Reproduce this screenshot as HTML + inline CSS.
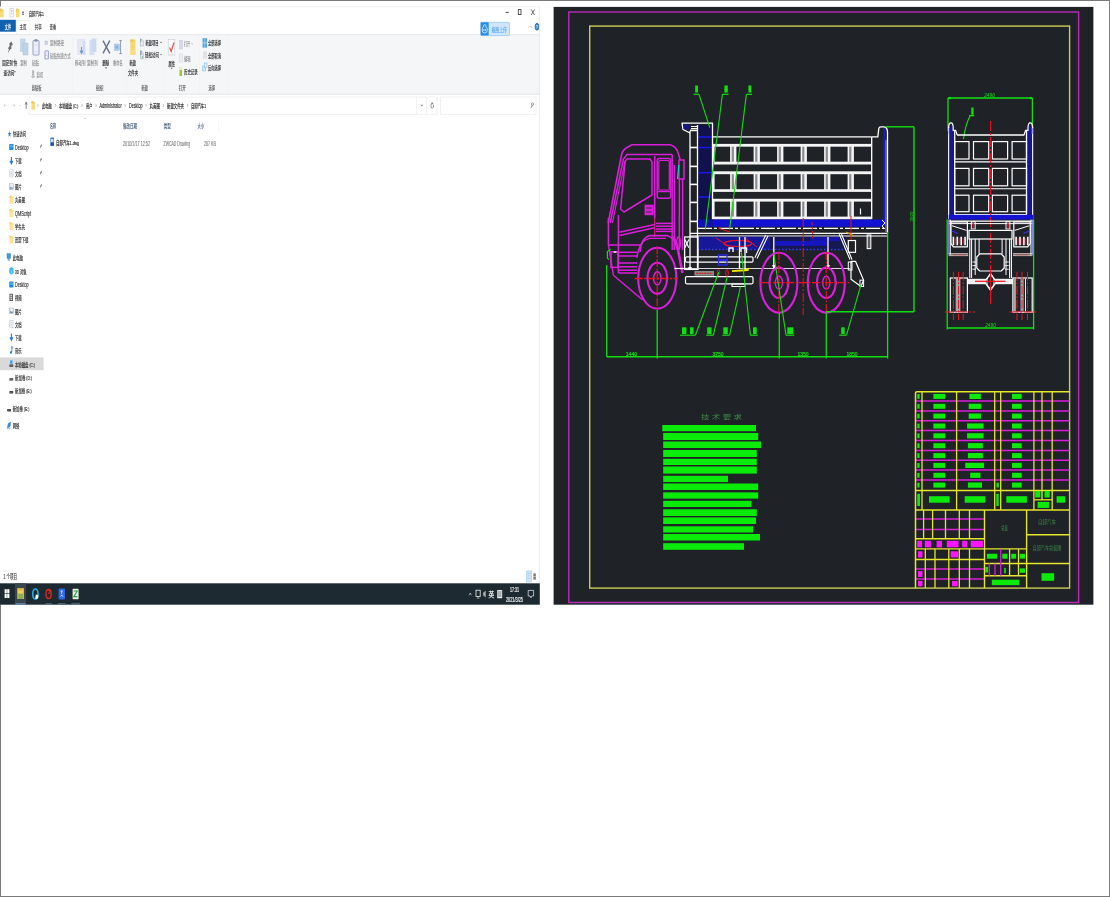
<!DOCTYPE html>
<html lang="zh-CN"><head><meta charset="utf-8"><title>自卸汽车1</title>
<style>
html,body{margin:0;padding:0;background:#fff;}
body{width:1110px;height:897px;overflow:hidden;position:relative;font-family:"Liberation Sans","Noto Sans CJK SC",sans-serif;}
#frame{position:absolute;left:0;top:0;width:1108px;height:895px;border:1px solid #7a7a7a;}
svg{position:absolute;left:0;top:0;opacity:0.999;}
text{white-space:pre;}
#cad{filter:blur(0.35px);}
#explorer{filter:blur(0.25px);}
</style></head><body>
<div id="frame"></div>
<svg id="explorer" width="1110" height="897" viewBox="0 0 1110 897">
<rect x="0" y="6.7" width="539.8" height="598" fill="#ffffff" stroke="none" stroke-width="1" rx="0" />
<line x1="0" y1="6.9" x2="539.8" y2="6.9" stroke="#e6e6e6" stroke-width="0.6" />
<rect x="0" y="8.6" width="2" height="2.2" fill="#e9b94e" stroke="none" stroke-width="1" rx="0" />
<rect x="0" y="9.6" width="3.6" height="7.6" fill="#f7d978" stroke="none" stroke-width="1" rx="0" />
<rect x="0" y="9.6" width="3.6" height="1.5" fill="#e9b94e" stroke="none" stroke-width="1" rx="0" opacity="0.55"/>
<rect x="10" y="8.4" width="3.2" height="8.6" fill="#fdfdfd" stroke="#b9b9c6" stroke-width="0.5" rx="0" />
<line x1="11" y1="11" x2="12.4" y2="11" stroke="#c55" stroke-width="0.7" />
<line x1="11" y1="13.8" x2="12.4" y2="13.8" stroke="#88a" stroke-width="0.6" />
<rect x="16" y="8.6" width="2" height="2.2" fill="#efc44f" stroke="none" stroke-width="1" rx="0" />
<rect x="16" y="9.6" width="3.6" height="7.6" fill="#f8dc6e" stroke="none" stroke-width="1" rx="0" />
<rect x="16" y="9.6" width="3.6" height="1.5" fill="#efc44f" stroke="none" stroke-width="1" rx="0" opacity="0.55"/>
<line x1="22" y1="12.2" x2="24" y2="12.2" stroke="#333" stroke-width="0.9" />
<line x1="22" y1="14.2" x2="24" y2="14.2" stroke="#333" stroke-width="0.9" />
<line x1="26.2" y1="9.5" x2="26.2" y2="16.5" stroke="#d8d8d8" stroke-width="0.5" />
<text x="28.7" y="15.6" textLength="15.3" lengthAdjust="spacingAndGlyphs" fill="#333" stroke="#333" stroke-width="0.18" font-size="5.9" font-family="Liberation Sans, 'Noto Sans CJK SC', sans-serif" >自卸汽车1</text>
<line x1="505.5" y1="12.4" x2="508.8" y2="12.4" stroke="#333" stroke-width="0.8" />
<rect x="518.3" y="9.6" width="2.7" height="5" fill="none" stroke="#333" stroke-width="0.8" rx="0" />
<line x1="531.2" y1="9.4" x2="534.6" y2="15" stroke="#333" stroke-width="0.7" />
<line x1="534.6" y1="9.4" x2="531.2" y2="15" stroke="#333" stroke-width="0.7" />
<rect x="0" y="19.8" width="15.8" height="11.9" fill="#1161b1" stroke="none" stroke-width="1" rx="0" />
<text x="4.8" y="29" textLength="6.2" lengthAdjust="spacingAndGlyphs" fill="#ffffff" stroke="#ffffff" stroke-width="0.18" font-size="6.2" font-family="Liberation Sans, 'Noto Sans CJK SC', sans-serif" >文件</text>
<text x="19.5" y="29.2" textLength="7" lengthAdjust="spacingAndGlyphs" fill="#444" stroke="#444" stroke-width="0.18" font-size="6.2" font-family="Liberation Sans, 'Noto Sans CJK SC', sans-serif" >主页</text>
<text x="34.7" y="29.2" textLength="6.9" lengthAdjust="spacingAndGlyphs" fill="#444" stroke="#444" stroke-width="0.18" font-size="6.2" font-family="Liberation Sans, 'Noto Sans CJK SC', sans-serif" >共享</text>
<text x="49.8" y="29.2" textLength="6.2" lengthAdjust="spacingAndGlyphs" fill="#444" stroke="#444" stroke-width="0.18" font-size="6.2" font-family="Liberation Sans, 'Noto Sans CJK SC', sans-serif" >查看</text>
<rect x="16.6" y="20.6" width="13.4" height="14.2" fill="none" stroke="#e4e5e6" stroke-width="0.5" rx="0" />
<rect x="0" y="34.6" width="539.8" height="59.6" fill="#f5f6f7" stroke="none" stroke-width="1" rx="0" />
<line x1="0" y1="34.6" x2="539.8" y2="34.6" stroke="#e2e3e4" stroke-width="0.7" />
<line x1="0" y1="94.2" x2="539.8" y2="94.2" stroke="#dcdddd" stroke-width="0.8" />
<line x1="72.7" y1="37" x2="72.7" y2="92" stroke="#eeeff0" stroke-width="0.5" />
<line x1="126.3" y1="37" x2="126.3" y2="92" stroke="#eeeff0" stroke-width="0.5" />
<line x1="164" y1="37" x2="164" y2="92" stroke="#eeeff0" stroke-width="0.5" />
<line x1="199.3" y1="37" x2="199.3" y2="92" stroke="#eeeff0" stroke-width="0.5" />
<line x1="228" y1="37" x2="228" y2="92" stroke="#eeeff0" stroke-width="0.5" />
<path d="M11.6 41.5 l1.2 3.2 l-1.6 1.4 l0.3 3 l-1.3 0.2 l-2.4 4.2 l1.2 -4.6 l-1.2 -0.4 l1.8 -2.6 l-0.2 -2.6 z" fill="#6e6e6e" stroke="none" stroke-width="0" />
<text x="2.3" y="65.3" textLength="15" lengthAdjust="spacingAndGlyphs" fill="#333" stroke="#333" stroke-width="0.18" font-size="6.0" font-family="Liberation Sans, 'Noto Sans CJK SC', sans-serif" >固定到“快</text>
<text x="3.6" y="74.7" textLength="11.9" lengthAdjust="spacingAndGlyphs" fill="#333" stroke="#333" stroke-width="0.18" font-size="6.0" font-family="Liberation Sans, 'Noto Sans CJK SC', sans-serif" >速访问”</text>
<rect x="20.4" y="39" width="4.6" height="12.5" fill="#c4d7ec" stroke="#a9c2de" stroke-width="0.4" rx="0" />
<rect x="23" y="43" width="5" height="12" fill="#bdd3ea" stroke="#a3bfdc" stroke-width="0.4" rx="0" />
<text x="20.2" y="65.3" textLength="6.8" lengthAdjust="spacingAndGlyphs" fill="#8c8c8c" stroke="#8c8c8c" stroke-width="0.1" font-size="6.0" font-family="Liberation Sans, 'Noto Sans CJK SC', sans-serif" >复制</text>
<rect x="33" y="40.5" width="6" height="14.5" fill="#edf0f8" stroke="#7e8db6" stroke-width="0.8" rx="0.6" />
<rect x="34.6" y="39.2" width="2.8" height="2.4" fill="#7e8db6" stroke="none" stroke-width="1" rx="0" />
<line x1="34.8" y1="45" x2="37.2" y2="45" stroke="#b8c0d8" stroke-width="0.5" />
<line x1="34.8" y1="51.6" x2="37.2" y2="51.6" stroke="#b8c0d8" stroke-width="0.5" />
<text x="32" y="65.3" textLength="7" lengthAdjust="spacingAndGlyphs" fill="#8c8c8c" stroke="#8c8c8c" stroke-width="0.1" font-size="6.0" font-family="Liberation Sans, 'Noto Sans CJK SC', sans-serif" >粘贴</text>
<path d="M32.6 70.2 v5 M33.6 70.2 v5" fill="none" stroke="#777" stroke-width="0.5" />
<ellipse cx="32.4" cy="76.6" rx="0.6" ry="1" fill="none" stroke="#777" stroke-width="0.4"/>
<ellipse cx="33.8" cy="76.6" rx="0.6" ry="1" fill="none" stroke="#777" stroke-width="0.4"/>
<text x="36.4" y="76.5" textLength="6.8" lengthAdjust="spacingAndGlyphs" fill="#8c8c8c" stroke="#8c8c8c" stroke-width="0.1" font-size="6.0" font-family="Liberation Sans, 'Noto Sans CJK SC', sans-serif" >剪切</text>
<rect x="45" y="41" width="2.4" height="3.6" fill="#d6dbe6" stroke="#9aa3b8" stroke-width="0.4" rx="0" />
<text x="50" y="45.3" textLength="14" lengthAdjust="spacingAndGlyphs" fill="#8c8c8c" stroke="#8c8c8c" stroke-width="0.1" font-size="6.0" font-family="Liberation Sans, 'Noto Sans CJK SC', sans-serif" >复制路径</text>
<rect x="44.9" y="50.8" width="3.6" height="8.2" fill="#e4e8f6" stroke="#7f8cc0" stroke-width="0.7" rx="0.5" />
<rect x="45.8" y="55.2" width="1.8" height="3" fill="#fff" stroke="#8f9acb" stroke-width="0.3" rx="0" />
<text x="50" y="57.6" textLength="20.6" lengthAdjust="spacingAndGlyphs" fill="#8c8c8c" stroke="#8c8c8c" stroke-width="0.1" font-size="6.0" font-family="Liberation Sans, 'Noto Sans CJK SC', sans-serif" >粘贴快捷方式</text>
<text x="31.7" y="90.2" textLength="9.7" lengthAdjust="spacingAndGlyphs" fill="#666" stroke="#666" stroke-width="0.18" font-size="6.0" font-family="Liberation Sans, 'Noto Sans CJK SC', sans-serif" >剪贴板</text>
<rect x="77" y="39" width="8" height="16" fill="#e4e6f4" stroke="none" stroke-width="1" rx="0" />
<path d="M81.6 47 v5 M80 50.6 l1.6 2.6 l1.6 -2.6" fill="none" stroke="#6d9bd6" stroke-width="1.1" />
<rect x="83" y="41" width="2.4" height="14" fill="#d2dbed" stroke="none" stroke-width="1" rx="0" />
<text x="75" y="65.3" textLength="10.5" lengthAdjust="spacingAndGlyphs" fill="#8c8c8c" stroke="#8c8c8c" stroke-width="0.1" font-size="6.0" font-family="Liberation Sans, 'Noto Sans CJK SC', sans-serif" >移动到</text>
<rect x="89.4" y="40" width="5.1" height="15" fill="#d3e0f0" stroke="none" stroke-width="1" rx="0" />
<rect x="91.5" y="38.6" width="4.9" height="13.4" fill="#c9daee" stroke="none" stroke-width="1" rx="0" />
<text x="87" y="65.3" textLength="10.7" lengthAdjust="spacingAndGlyphs" fill="#8c8c8c" stroke="#8c8c8c" stroke-width="0.1" font-size="6.0" font-family="Liberation Sans, 'Noto Sans CJK SC', sans-serif" >复制到</text>
<line x1="103" y1="40.6" x2="109.8" y2="53.4" stroke="#67738c" stroke-width="1.4" />
<line x1="109.8" y1="40.6" x2="103" y2="53.4" stroke="#67738c" stroke-width="1.4" />
<text x="102.5" y="65.3" textLength="6.7" lengthAdjust="spacingAndGlyphs" fill="#333" stroke="#333" stroke-width="0.18" font-size="6.0" font-family="Liberation Sans, 'Noto Sans CJK SC', sans-serif" >删除</text>
<path d="M105.4 67.6 h1.2 l-0.6 1 z" fill="#333" stroke="#333" stroke-width="0.3" />
<rect x="114.3" y="44" width="5.3" height="6.5" fill="#b4cdea" stroke="#9bb9dd" stroke-width="0.4" rx="0" />
<rect x="115.4" y="45.6" width="2.6" height="3" fill="#8eb0d8" stroke="none" stroke-width="1" rx="0" />
<path d="M119.3 40.6 h2.6 M120.6 40.6 v13 M119.3 53.6 h2.6" fill="none" stroke="#7385a4" stroke-width="0.8" />
<text x="113" y="65.3" textLength="9.6" lengthAdjust="spacingAndGlyphs" fill="#8c8c8c" stroke="#8c8c8c" stroke-width="0.1" font-size="6.0" font-family="Liberation Sans, 'Noto Sans CJK SC', sans-serif" >重命名</text>
<rect x="130.3" y="39.5" width="5.1" height="15.5" fill="#f7d86e" stroke="none" stroke-width="1" rx="0" />
<rect x="130.3" y="39.5" width="3.1" height="2.5" fill="#f0c656" stroke="none" stroke-width="1" rx="0" />
<rect x="130" y="50" width="5.6" height="5" fill="#f9e08a" stroke="none" stroke-width="1" rx="0" opacity="0.7"/>
<text x="129.5" y="65.3" textLength="6.5" lengthAdjust="spacingAndGlyphs" fill="#333" stroke="#333" stroke-width="0.18" font-size="6.0" font-family="Liberation Sans, 'Noto Sans CJK SC', sans-serif" >新建</text>
<text x="128" y="75" textLength="10" lengthAdjust="spacingAndGlyphs" fill="#333" stroke="#333" stroke-width="0.18" font-size="6.0" font-family="Liberation Sans, 'Noto Sans CJK SC', sans-serif" >文件夹</text>
<text x="96" y="90.2" textLength="7.5" lengthAdjust="spacingAndGlyphs" fill="#666" stroke="#666" stroke-width="0.18" font-size="6.0" font-family="Liberation Sans, 'Noto Sans CJK SC', sans-serif" >组织</text>
<text x="141.5" y="90.2" textLength="6.5" lengthAdjust="spacingAndGlyphs" fill="#666" stroke="#666" stroke-width="0.18" font-size="6.0" font-family="Liberation Sans, 'Noto Sans CJK SC', sans-serif" >新建</text>
<path d="M140.4 38.6 v7.4 h2.8 v-5.4 z" fill="#f0eef8" stroke="#8d96b8" stroke-width="0.5" />
<line x1="140.8" y1="39" x2="140.8" y2="42" stroke="#5aa05a" stroke-width="0.7" />
<text x="145.4" y="45" textLength="13.1" lengthAdjust="spacingAndGlyphs" fill="#333" stroke="#333" stroke-width="0.18" font-size="6.0" font-family="Liberation Sans, 'Noto Sans CJK SC', sans-serif" >新建项目</text>
<path d="M160.4 42 h1.3 l-0.65 0.9 z" fill="#333" stroke="#333" stroke-width="0.2" />
<path d="M140.6 50.4 v8.4 h2.6 v-6 z" fill="#eef3f8" stroke="#8d96b8" stroke-width="0.5" />
<line x1="141" y1="51" x2="141" y2="55" stroke="#55a" stroke-width="0.7" />
<line x1="142.4" y1="56" x2="142.4" y2="58.5" stroke="#5a5" stroke-width="0.6" />
<text x="145" y="57.2" textLength="14" lengthAdjust="spacingAndGlyphs" fill="#333" stroke="#333" stroke-width="0.18" font-size="6.0" font-family="Liberation Sans, 'Noto Sans CJK SC', sans-serif" >轻松访问</text>
<path d="M160.4 54.2 h1.3 l-0.65 0.9 z" fill="#333" stroke="#333" stroke-width="0.2" />
<rect x="168.2" y="39.6" width="6.6" height="15.4" fill="#fefefe" stroke="#c9c9d2" stroke-width="0.6" rx="0" />
<path d="M169.6 47.5 l1.6 4 l2.8 -9" fill="none" stroke="#e24a42" stroke-width="1.1" />
<line x1="169.4" y1="54" x2="173.8" y2="54" stroke="#e8b0b0" stroke-width="0.5" />
<text x="168.5" y="65.7" textLength="6.5" lengthAdjust="spacingAndGlyphs" fill="#333" stroke="#333" stroke-width="0.18" font-size="6.0" font-family="Liberation Sans, 'Noto Sans CJK SC', sans-serif" >属性</text>
<path d="M171 68.2 h1.3 l-0.65 0.9 z" fill="#333" stroke="#333" stroke-width="0.2" />
<rect x="179.5" y="40.2" width="3" height="8.8" fill="#d5dae8" stroke="#b9c0d6" stroke-width="0.4" rx="0" />
<text x="184" y="46.4" textLength="6" lengthAdjust="spacingAndGlyphs" fill="#8c8c8c" stroke="#8c8c8c" stroke-width="0.1" font-size="6.0" font-family="Liberation Sans, 'Noto Sans CJK SC', sans-serif" >打开</text>
<path d="M191.6 43.6 h1.1 l-0.55 0.8 z" fill="#aaa" stroke="#aaa" stroke-width="0.2" />
<rect x="179.5" y="54" width="3" height="8" fill="#eceef4" stroke="#c6cad8" stroke-width="0.4" rx="0" />
<text x="184" y="60.6" textLength="6.5" lengthAdjust="spacingAndGlyphs" fill="#8c8c8c" stroke="#8c8c8c" stroke-width="0.1" font-size="6.0" font-family="Liberation Sans, 'Noto Sans CJK SC', sans-serif" >编辑</text>
<rect x="179" y="67" width="3.4" height="9" fill="#e8eec0" stroke="none" stroke-width="1" rx="0" />
<rect x="179.6" y="70" width="2.4" height="6" fill="#9cc43c" stroke="none" stroke-width="1" rx="0" />
<text x="184" y="73.8" textLength="13.6" lengthAdjust="spacingAndGlyphs" fill="#333" stroke="#333" stroke-width="0.18" font-size="6.0" font-family="Liberation Sans, 'Noto Sans CJK SC', sans-serif" >历史记录</text>
<text x="178.7" y="90.2" textLength="7.3" lengthAdjust="spacingAndGlyphs" fill="#666" stroke="#666" stroke-width="0.18" font-size="6.0" font-family="Liberation Sans, 'Noto Sans CJK SC', sans-serif" >打开</text>
<rect x="202.6" y="38.2" width="4.4" height="9.4" fill="#4aa0ea" stroke="none" stroke-width="1" rx="0" />
<line x1="202.6" y1="42.9" x2="207" y2="42.9" stroke="#e8f3ff" stroke-width="0.6" />
<line x1="204.8" y1="38.2" x2="204.8" y2="47.6" stroke="#e8f3ff" stroke-width="0.5" />
<text x="208" y="45" textLength="13" lengthAdjust="spacingAndGlyphs" fill="#333" stroke="#333" stroke-width="0.18" font-size="6.0" font-family="Liberation Sans, 'Noto Sans CJK SC', sans-serif" >全部选择</text>
<rect x="203" y="51" width="4" height="8" fill="#e6e6ea" stroke="none" stroke-width="1" rx="0" />
<line x1="203" y1="53.6" x2="207" y2="53.6" stroke="#cfcfd6" stroke-width="0.5" />
<line x1="203" y1="56.3" x2="207" y2="56.3" stroke="#cfcfd6" stroke-width="0.5" />
<text x="208" y="57.6" textLength="13" lengthAdjust="spacingAndGlyphs" fill="#333" stroke="#333" stroke-width="0.18" font-size="6.0" font-family="Liberation Sans, 'Noto Sans CJK SC', sans-serif" >全部取消</text>
<rect x="202.8" y="66" width="2.8" height="5" fill="#dcebfa" stroke="#6aa8e6" stroke-width="0.5" rx="0" />
<rect x="204.4" y="63" width="2.6" height="4.6" fill="#eaf3fc" stroke="#6aa8e6" stroke-width="0.5" rx="0" />
<text x="208" y="69.7" textLength="13" lengthAdjust="spacingAndGlyphs" fill="#333" stroke="#333" stroke-width="0.18" font-size="6.0" font-family="Liberation Sans, 'Noto Sans CJK SC', sans-serif" >反向选择</text>
<text x="208.5" y="90.2" textLength="6.5" lengthAdjust="spacingAndGlyphs" fill="#666" stroke="#666" stroke-width="0.18" font-size="6.0" font-family="Liberation Sans, 'Noto Sans CJK SC', sans-serif" >选择</text>
<rect x="480.7" y="22.3" width="28.8" height="13.3" fill="#cfe7fb" stroke="#7bbcf0" stroke-width="0.6" rx="0.8" />
<rect x="480.7" y="22.3" width="8" height="13.3" fill="#2a8ee8" stroke="none" stroke-width="1" rx="0.8" />
<path d="M484.7 24.6 q1.4 0 1.4 2.2 q1.2 1 1.2 3.2 q0 3 -2.6 3 q-2.6 0 -2.6 -3 q0 -2.2 1.2 -3.2 q0 -2.2 1.4 -2.2z" fill="none" stroke="#fff" stroke-width="0.7" />
<circle cx="483.9" cy="30" r="0.7" fill="#fff"/><circle cx="485.5" cy="30" r="0.7" fill="#fff"/>
<text x="491.5" y="32" textLength="15.5" lengthAdjust="spacingAndGlyphs" fill="#5aa8ec" stroke="#5aa8ec" stroke-width="0.1" font-size="6.2" font-family="Liberation Sans, 'Noto Sans CJK SC', sans-serif" >拖拽上传</text>
<path d="M528.8 27.6 l1.4 -1.6 l1.4 1.6" fill="none" stroke="#c9a27a" stroke-width="0.6" />
<ellipse cx="537" cy="26.7" rx="1.9" ry="3.5" fill="#2f7fd0" stroke="#1f6fc0" stroke-width="0.8"/>
<text x="536.3" y="29.2" textLength="1.4" lengthAdjust="spacingAndGlyphs" fill="#fff" stroke="#fff" stroke-width="0.18" font-size="5" font-family="Liberation Sans, 'Noto Sans CJK SC', sans-serif" >?</text>
<path d="M4 105.4 h2.6 M4 105.4 l0.9 -1.4 M4 105.4 l0.9 1.4" fill="none" stroke="#c8c8c8" stroke-width="0.6" />
<path d="M15 105.4 h-2.6 M15 105.4 l-0.9 -1.4 M15 105.4 l-0.9 1.4" fill="none" stroke="#c8c8c8" stroke-width="0.6" />
<path d="M19.6 105 l0.6 0.9 l0.6 -0.9" fill="none" stroke="#bbb" stroke-width="0.5" />
<path d="M26.2 109 v-6.6 M25.2 104.6 l1 -2.4 l1 2.4" fill="none" stroke="#6a6a6a" stroke-width="0.8" />
<rect x="29" y="97" width="408" height="17.2" fill="#fff" stroke="#e6e6e6" stroke-width="0.6" rx="0" />
<rect x="440.5" y="97" width="95.5" height="17.2" fill="#fff" stroke="#e6e6e6" stroke-width="0.6" rx="0" />
<line x1="416.5" y1="97" x2="416.5" y2="114.2" stroke="#e6e6e6" stroke-width="0.5" />
<line x1="426.5" y1="97" x2="426.5" y2="114.2" stroke="#e6e6e6" stroke-width="0.5" />
<path d="M421 104.6 l0.8 1.6 l0.8 -1.6" fill="none" stroke="#555" stroke-width="0.6" />
<path d="M432.6 103.4 a1.3 2.4 0 1 0 0.9 1.4 M432.2 102.2 v1.6 h1.2" fill="none" stroke="#555" stroke-width="0.6" />
<path d="M532.6 102.6 a0.9 1.6 0 1 1 -0.1 0 M531.9 105.4 l-1 2.6" fill="none" stroke="#555" stroke-width="0.6" />
<rect x="31.4" y="101" width="2" height="2.2" fill="#edc050" stroke="none" stroke-width="1" rx="0" />
<rect x="31.4" y="102" width="3.6" height="7.7" fill="#f8dc7a" stroke="none" stroke-width="1" rx="0" />
<rect x="31.4" y="102" width="3.6" height="1.6" fill="#edc050" stroke="none" stroke-width="1" rx="0" opacity="0.55"/>
<path d="M37.65 104 l0.7 1.4 l-0.7 1.4" fill="none" stroke="#777" stroke-width="0.45" />
<path d="M55.35 104 l0.7 1.4 l-0.7 1.4" fill="none" stroke="#777" stroke-width="0.45" />
<path d="M81.65 104 l0.7 1.4 l-0.7 1.4" fill="none" stroke="#777" stroke-width="0.45" />
<path d="M95.65 104 l0.7 1.4 l-0.7 1.4" fill="none" stroke="#777" stroke-width="0.45" />
<path d="M124.65 104 l0.7 1.4 l-0.7 1.4" fill="none" stroke="#777" stroke-width="0.45" />
<path d="M145.65 104 l0.7 1.4 l-0.7 1.4" fill="none" stroke="#777" stroke-width="0.45" />
<path d="M163.15 104 l0.7 1.4 l-0.7 1.4" fill="none" stroke="#777" stroke-width="0.45" />
<path d="M187.25 104 l0.7 1.4 l-0.7 1.4" fill="none" stroke="#777" stroke-width="0.45" />
<text x="42" y="107.9" textLength="9.7" lengthAdjust="spacingAndGlyphs" fill="#2f2f2f" stroke="#2f2f2f" stroke-width="0.18" font-size="6.0" font-family="Liberation Sans, 'Noto Sans CJK SC', sans-serif" >此电脑</text>
<text x="59" y="107.9" textLength="19.4" lengthAdjust="spacingAndGlyphs" fill="#2f2f2f" stroke="#2f2f2f" stroke-width="0.18" font-size="6.0" font-family="Liberation Sans, 'Noto Sans CJK SC', sans-serif" >本地磁盘 (C:)</text>
<text x="86" y="107.9" textLength="6.4" lengthAdjust="spacingAndGlyphs" fill="#2f2f2f" stroke="#2f2f2f" stroke-width="0.18" font-size="6.0" font-family="Liberation Sans, 'Noto Sans CJK SC', sans-serif" >用户</text>
<text x="99.5" y="108.1" textLength="22.2" lengthAdjust="spacingAndGlyphs" fill="#2f2f2f" stroke="#2f2f2f" stroke-width="0.18" font-size="6.6000000000000005" font-family="Liberation Sans, 'Noto Sans CJK SC', sans-serif" >Administrator</text>
<text x="129" y="108.1" textLength="13.6" lengthAdjust="spacingAndGlyphs" fill="#2f2f2f" stroke="#2f2f2f" stroke-width="0.18" font-size="6.6000000000000005" font-family="Liberation Sans, 'Noto Sans CJK SC', sans-serif" >Desktop</text>
<text x="149.5" y="107.9" textLength="10.5" lengthAdjust="spacingAndGlyphs" fill="#2f2f2f" stroke="#2f2f2f" stroke-width="0.18" font-size="6.0" font-family="Liberation Sans, 'Noto Sans CJK SC', sans-serif" >丸美图</text>
<text x="167" y="107.9" textLength="17" lengthAdjust="spacingAndGlyphs" fill="#2f2f2f" stroke="#2f2f2f" stroke-width="0.18" font-size="6.0" font-family="Liberation Sans, 'Noto Sans CJK SC', sans-serif" >新建文件夹</text>
<text x="190.9" y="107.9" textLength="15.1" lengthAdjust="spacingAndGlyphs" fill="#2f2f2f" stroke="#2f2f2f" stroke-width="0.18" font-size="6.0" font-family="Liberation Sans, 'Noto Sans CJK SC', sans-serif" >自卸汽车1</text>
<text x="50" y="128.4" textLength="6" lengthAdjust="spacingAndGlyphs" fill="#4a6080" stroke="#4a6080" stroke-width="0.18" font-size="6.0" font-family="Liberation Sans, 'Noto Sans CJK SC', sans-serif" >名称</text>
<text x="123" y="128.4" textLength="14" lengthAdjust="spacingAndGlyphs" fill="#4a6080" stroke="#4a6080" stroke-width="0.18" font-size="6.0" font-family="Liberation Sans, 'Noto Sans CJK SC', sans-serif" >修改日期</text>
<text x="163.8" y="128.4" textLength="6.9" lengthAdjust="spacingAndGlyphs" fill="#4a6080" stroke="#4a6080" stroke-width="0.18" font-size="6.0" font-family="Liberation Sans, 'Noto Sans CJK SC', sans-serif" >类型</text>
<text x="197.4" y="128.4" textLength="6.6" lengthAdjust="spacingAndGlyphs" fill="#4a6080" stroke="#4a6080" stroke-width="0.18" font-size="6.0" font-family="Liberation Sans, 'Noto Sans CJK SC', sans-serif" >大小</text>
<path d="M84.6 119 l0.6 -0.9 l0.6 0.9" fill="none" stroke="#999" stroke-width="0.5" />
<line x1="121" y1="120" x2="121" y2="131" stroke="#ececec" stroke-width="0.5" />
<line x1="162" y1="120" x2="162" y2="131" stroke="#ececec" stroke-width="0.5" />
<line x1="195.4" y1="120" x2="195.4" y2="131" stroke="#ececec" stroke-width="0.5" />
<line x1="218.6" y1="120" x2="218.6" y2="131" stroke="#ececec" stroke-width="0.5" />
<rect x="50.4" y="137.6" width="3.6" height="8.4" fill="#3a78c8" stroke="none" stroke-width="1" rx="0.6" />
<rect x="50.9" y="139" width="2.6" height="3" fill="#cfe0f6" stroke="none" stroke-width="1" rx="0" />
<rect x="50.7" y="143.2" width="3" height="2.2" fill="#1d4fa0" stroke="none" stroke-width="1" rx="0" />
<text x="56" y="145" textLength="23" lengthAdjust="spacingAndGlyphs" fill="#2b2b2b" stroke="#2b2b2b" stroke-width="0.18" font-size="6.0" font-family="Liberation Sans, 'Noto Sans CJK SC', sans-serif" >自卸汽车1.dwg</text>
<text x="123" y="145.7" textLength="27" lengthAdjust="spacingAndGlyphs" fill="#7a7a7a" stroke="#7a7a7a" stroke-width="0.1" font-size="6.490000000000001" font-family="Liberation Sans, 'Noto Sans CJK SC', sans-serif" >2010/1/17 12:52</text>
<text x="163.5" y="145.7" textLength="26.7" lengthAdjust="spacingAndGlyphs" fill="#7a7a7a" stroke="#7a7a7a" stroke-width="0.1" font-size="6.490000000000001" font-family="Liberation Sans, 'Noto Sans CJK SC', sans-serif" >ZWCAD Drawing</text>
<text x="204" y="145.7" textLength="12" lengthAdjust="spacingAndGlyphs" fill="#7a7a7a" stroke="#7a7a7a" stroke-width="0.1" font-size="6.490000000000001" font-family="Liberation Sans, 'Noto Sans CJK SC', sans-serif" >267 KB</text>
<path d="M9.5 130.79999999999998 l0.5 2.2 l1.2 0 l-1 1.4 l0.45 2.5 l-1.15 -1.5 l-1.15 1.5 l0.45 -2.5 l-1 -1.4 l1.2 0 z" fill="#3b7fd0" stroke="none" stroke-width="0" />
<text x="13" y="136.2" textLength="13" lengthAdjust="spacingAndGlyphs" fill="#333333" stroke="#333333" stroke-width="0.18" font-size="6.0" font-family="Liberation Sans, 'Noto Sans CJK SC', sans-serif" >快速访问</text>
<rect x="9.2" y="144" width="4.3" height="6" fill="#1f88e6" stroke="none" stroke-width="1" rx="0.4" />
<rect x="9.7" y="144.8" width="3.3" height="2.8" fill="#49a6f2" stroke="none" stroke-width="1" rx="0" />
<text x="15" y="150.1" textLength="13.6" lengthAdjust="spacingAndGlyphs" fill="#333333" stroke="#333333" stroke-width="0.18" font-size="6.6000000000000005" font-family="Liberation Sans, 'Noto Sans CJK SC', sans-serif" >Desktop</text>
<path d="M41.5 144.1 l0.5 1.6 l-0.9 1 l-0.3 2.4 l-0.4 -2.2 l-0.6 -0.4 l0.9 -1 z" fill="#7a7a7a" stroke="none" stroke-width="0" />
<path d="M11.4 156.9 v5.6 M9.9 160.7 l1.5 3 l1.5 -3" fill="none" stroke="#2b78d0" stroke-width="1.1" />
<text x="15" y="163.2" textLength="6.6" lengthAdjust="spacingAndGlyphs" fill="#333333" stroke="#333333" stroke-width="0.18" font-size="6.0" font-family="Liberation Sans, 'Noto Sans CJK SC', sans-serif" >下载</text>
<path d="M41.5 157.6 l0.5 1.6 l-0.9 1 l-0.3 2.4 l-0.4 -2.2 l-0.6 -0.4 l0.9 -1 z" fill="#7a7a7a" stroke="none" stroke-width="0" />
<rect x="9.8" y="169.8" width="3.2" height="7.2" fill="#fafbfd" stroke="#a9b6c9" stroke-width="0.45" rx="0" />
<line x1="10.4" y1="171.8" x2="12.4" y2="171.8" stroke="#8fa4c2" stroke-width="0.45" />
<line x1="10.4" y1="173.4" x2="12.4" y2="173.4" stroke="#8fa4c2" stroke-width="0.45" />
<line x1="10.4" y1="175" x2="12.4" y2="175" stroke="#8fa4c2" stroke-width="0.45" />
<text x="15" y="176.1" textLength="6.6" lengthAdjust="spacingAndGlyphs" fill="#333333" stroke="#333333" stroke-width="0.18" font-size="6.0" font-family="Liberation Sans, 'Noto Sans CJK SC', sans-serif" >文档</text>
<path d="M41.5 170.6 l0.5 1.6 l-0.9 1 l-0.3 2.4 l-0.4 -2.2 l-0.6 -0.4 l0.9 -1 z" fill="#7a7a7a" stroke="none" stroke-width="0" />
<rect x="9.2" y="183.8" width="4.2" height="5.6" fill="#e9eff6" stroke="#8a9db6" stroke-width="0.45" rx="0" />
<path d="M9.6 188.79999999999998 l1.1 -2.6 l0.9 1.6 l0.6 -1 l0.9 2 z" fill="#6f93bd" stroke="none" stroke-width="0" />
<text x="15" y="189.3" textLength="6.6" lengthAdjust="spacingAndGlyphs" fill="#333333" stroke="#333333" stroke-width="0.18" font-size="6.0" font-family="Liberation Sans, 'Noto Sans CJK SC', sans-serif" >图片</text>
<path d="M41.5 183.79999999999998 l0.5 1.6 l-0.9 1 l-0.3 2.4 l-0.4 -2.2 l-0.6 -0.4 l0.9 -1 z" fill="#7a7a7a" stroke="none" stroke-width="0" />
<rect x="9.5" y="195.6" width="2.1" height="2" fill="#f0cb66" stroke="none" stroke-width="1" rx="0" />
<rect x="9.5" y="196.6" width="3.9" height="7" fill="#fae39a" stroke="none" stroke-width="1" rx="0" />
<rect x="9.5" y="196.6" width="3.9" height="1.4" fill="#f0cb66" stroke="none" stroke-width="1" rx="0" opacity="0.55"/>
<text x="15" y="202.3" textLength="10" lengthAdjust="spacingAndGlyphs" fill="#333333" stroke="#333333" stroke-width="0.18" font-size="6.0" font-family="Liberation Sans, 'Noto Sans CJK SC', sans-serif" >丸美图</text>
<rect x="9.5" y="209" width="2.1" height="2" fill="#f0cb66" stroke="none" stroke-width="1" rx="0" />
<rect x="9.5" y="210" width="3.9" height="7" fill="#fae39a" stroke="none" stroke-width="1" rx="0" />
<rect x="9.5" y="210" width="3.9" height="1.4" fill="#f0cb66" stroke="none" stroke-width="1" rx="0" opacity="0.55"/>
<text x="15" y="215.9" textLength="16" lengthAdjust="spacingAndGlyphs" fill="#333333" stroke="#333333" stroke-width="0.18" font-size="6.6000000000000005" font-family="Liberation Sans, 'Noto Sans CJK SC', sans-serif" >QMScript</text>
<rect x="9.5" y="222.2" width="2.1" height="2" fill="#f0cb66" stroke="none" stroke-width="1" rx="0" />
<rect x="9.5" y="223.2" width="3.9" height="7" fill="#fae39a" stroke="none" stroke-width="1" rx="0" />
<rect x="9.5" y="223.2" width="3.9" height="1.4" fill="#f0cb66" stroke="none" stroke-width="1" rx="0" opacity="0.55"/>
<text x="15" y="228.9" textLength="10" lengthAdjust="spacingAndGlyphs" fill="#333333" stroke="#333333" stroke-width="0.18" font-size="6.0" font-family="Liberation Sans, 'Noto Sans CJK SC', sans-serif" >学先先</text>
<rect x="9.5" y="235.6" width="2.1" height="2" fill="#f0cb66" stroke="none" stroke-width="1" rx="0" />
<rect x="9.5" y="236.6" width="3.9" height="7" fill="#fae39a" stroke="none" stroke-width="1" rx="0" />
<rect x="9.5" y="236.6" width="3.9" height="1.4" fill="#f0cb66" stroke="none" stroke-width="1" rx="0" opacity="0.55"/>
<text x="15" y="242.3" textLength="13.4" lengthAdjust="spacingAndGlyphs" fill="#333333" stroke="#333333" stroke-width="0.18" font-size="6.0" font-family="Liberation Sans, 'Noto Sans CJK SC', sans-serif" >迅雷下载</text>
<rect x="7" y="253.6" width="3.6" height="5" fill="#3d9be6" stroke="#2a7fce" stroke-width="0.4" rx="0" />
<line x1="7.6" y1="260" x2="10" y2="260" stroke="#2a7fce" stroke-width="0.8" />
<line x1="8.8" y1="258.6" x2="8.8" y2="260" stroke="#2a7fce" stroke-width="0.6" />
<text x="12.7" y="259.9" textLength="10.3" lengthAdjust="spacingAndGlyphs" fill="#333333" stroke="#333333" stroke-width="0.18" font-size="6.0" font-family="Liberation Sans, 'Noto Sans CJK SC', sans-serif" >此电脑</text>
<path d="M9.6 268.6 l1.8 -1.4 l1.8 1.4 v4.6 l-1.8 1.4 l-1.8 -1.4 z" fill="#3fbdf0" stroke="#1f9ad6" stroke-width="0.4" />
<path d="M11.399999999999999 270.4 v4.2" fill="none" stroke="#e8f8ff" stroke-width="0.4" />
<text x="15" y="273.7" textLength="11.5" lengthAdjust="spacingAndGlyphs" fill="#333333" stroke="#333333" stroke-width="0.18" font-size="6.0" font-family="Liberation Sans, 'Noto Sans CJK SC', sans-serif" >3D 对象</text>
<rect x="9.2" y="281.4" width="4.3" height="6" fill="#1f88e6" stroke="none" stroke-width="1" rx="0.4" />
<rect x="9.7" y="282.2" width="3.3" height="2.8" fill="#49a6f2" stroke="none" stroke-width="1" rx="0" />
<text x="15" y="287.4" textLength="13.6" lengthAdjust="spacingAndGlyphs" fill="#333333" stroke="#333333" stroke-width="0.18" font-size="6.6000000000000005" font-family="Liberation Sans, 'Noto Sans CJK SC', sans-serif" >Desktop</text>
<rect x="9.5" y="293.8" width="3.4" height="7.2" fill="#4a4a4a" stroke="none" stroke-width="1" rx="0" />
<rect x="10.3" y="294.6" width="1.8" height="1.6" fill="#d8d8d8" stroke="none" stroke-width="1" rx="0" />
<rect x="10.3" y="296.6" width="1.8" height="1.6" fill="#d8d8d8" stroke="none" stroke-width="1" rx="0" />
<rect x="10.3" y="298.6" width="1.8" height="1.6" fill="#d8d8d8" stroke="none" stroke-width="1" rx="0" />
<text x="15" y="300.1" textLength="6.6" lengthAdjust="spacingAndGlyphs" fill="#333333" stroke="#333333" stroke-width="0.18" font-size="6.0" font-family="Liberation Sans, 'Noto Sans CJK SC', sans-serif" >视频</text>
<rect x="9.2" y="308" width="4.2" height="5.6" fill="#e9eff6" stroke="#8a9db6" stroke-width="0.45" rx="0" />
<path d="M9.6 313.0 l1.1 -2.6 l0.9 1.6 l0.6 -1 l0.9 2 z" fill="#6f93bd" stroke="none" stroke-width="0" />
<text x="15" y="313.5" textLength="6.6" lengthAdjust="spacingAndGlyphs" fill="#333333" stroke="#333333" stroke-width="0.18" font-size="6.0" font-family="Liberation Sans, 'Noto Sans CJK SC', sans-serif" >图片</text>
<rect x="9.8" y="320.6" width="3.2" height="7.2" fill="#fafbfd" stroke="#a9b6c9" stroke-width="0.45" rx="0" />
<line x1="10.4" y1="322.6" x2="12.4" y2="322.6" stroke="#8fa4c2" stroke-width="0.45" />
<line x1="10.4" y1="324.2" x2="12.4" y2="324.2" stroke="#8fa4c2" stroke-width="0.45" />
<line x1="10.4" y1="325.8" x2="12.4" y2="325.8" stroke="#8fa4c2" stroke-width="0.45" />
<text x="15" y="326.9" textLength="6.6" lengthAdjust="spacingAndGlyphs" fill="#333333" stroke="#333333" stroke-width="0.18" font-size="6.0" font-family="Liberation Sans, 'Noto Sans CJK SC', sans-serif" >文档</text>
<path d="M11.4 333.4 v5.6 M9.9 337.2 l1.5 3 l1.5 -3" fill="none" stroke="#2b78d0" stroke-width="1.1" />
<text x="15" y="339.7" textLength="6.6" lengthAdjust="spacingAndGlyphs" fill="#333333" stroke="#333333" stroke-width="0.18" font-size="6.0" font-family="Liberation Sans, 'Noto Sans CJK SC', sans-serif" >下载</text>
<path d="M11.799999999999999 346.2 v6" fill="none" stroke="#2b78d0" stroke-width="0.8" />
<ellipse cx="11" cy="352.4" rx="1" ry="1.3" fill="#2b78d0" stroke="none" stroke-width="0"/>
<path d="M11.799999999999999 346.2 q1.2 0.6 1 2.4" fill="none" stroke="#2b78d0" stroke-width="0.6" />
<text x="15" y="352.5" textLength="6.6" lengthAdjust="spacingAndGlyphs" fill="#333333" stroke="#333333" stroke-width="0.18" font-size="6.0" font-family="Liberation Sans, 'Noto Sans CJK SC', sans-serif" >音乐</text>
<rect x="0" y="357.4" width="43.6" height="12.8" fill="#d9d9d9" stroke="none" stroke-width="1" rx="0" />
<rect x="9.4" y="364.4" width="3.8" height="2.4" fill="#3a3a3a" stroke="none" stroke-width="1" rx="0.3" />
<line x1="10" y1="365.6" x2="12.6" y2="365.6" stroke="#9a9a9a" stroke-width="0.5" />
<rect x="10.2" y="360.4" width="2.2" height="3.4" fill="#2f9be8" stroke="none" stroke-width="1" rx="0" />
<text x="15" y="366.5" textLength="20" lengthAdjust="spacingAndGlyphs" fill="#333333" stroke="#333333" stroke-width="0.18" font-size="6.0" font-family="Liberation Sans, 'Noto Sans CJK SC', sans-serif" >本地磁盘 (C:)</text>
<rect x="9.4" y="378.2" width="3.8" height="2.4" fill="#3a3a3a" stroke="none" stroke-width="1" rx="0.3" />
<line x1="10" y1="379.4" x2="12.6" y2="379.4" stroke="#9a9a9a" stroke-width="0.5" />
<text x="15" y="380.4" textLength="17" lengthAdjust="spacingAndGlyphs" fill="#333333" stroke="#333333" stroke-width="0.18" font-size="6.0" font-family="Liberation Sans, 'Noto Sans CJK SC', sans-serif" >新加卷 (D:)</text>
<rect x="9.4" y="391" width="3.8" height="2.4" fill="#3a3a3a" stroke="none" stroke-width="1" rx="0.3" />
<line x1="10" y1="392.2" x2="12.6" y2="392.2" stroke="#9a9a9a" stroke-width="0.5" />
<text x="15" y="393.1" textLength="16.6" lengthAdjust="spacingAndGlyphs" fill="#333333" stroke="#333333" stroke-width="0.18" font-size="6.0" font-family="Liberation Sans, 'Noto Sans CJK SC', sans-serif" >新加卷 (E:)</text>
<rect x="7.2" y="409" width="3.8" height="2.4" fill="#3a3a3a" stroke="none" stroke-width="1" rx="0.3" />
<line x1="7.8" y1="410.2" x2="10.4" y2="410.2" stroke="#9a9a9a" stroke-width="0.5" />
<text x="12.7" y="411.1" textLength="16.6" lengthAdjust="spacingAndGlyphs" fill="#333333" stroke="#333333" stroke-width="0.18" font-size="6.0" font-family="Liberation Sans, 'Noto Sans CJK SC', sans-serif" >新加卷 (E:)</text>
<path d="M7.3 428 l0.9 -4.4 l2.4 -1.6 l-0.3 4.2 z" fill="#3a90e0" stroke="#2470c0" stroke-width="0.4" />
<line x1="7.2" y1="428.2" x2="10.6" y2="428.2" stroke="#2470c0" stroke-width="0.6" />
<text x="12.7" y="427.9" textLength="6.7" lengthAdjust="spacingAndGlyphs" fill="#333333" stroke="#333333" stroke-width="0.18" font-size="6.0" font-family="Liberation Sans, 'Noto Sans CJK SC', sans-serif" >网络</text>
<text x="3.5" y="579.3" textLength="13.5" lengthAdjust="spacingAndGlyphs" fill="#444" stroke="#444" stroke-width="0.18" font-size="6.3" font-family="Liberation Sans, 'Noto Sans CJK SC', sans-serif" >1 个项目</text>
<rect x="526.6" y="571" width="4.8" height="11" fill="#d3e6f5" stroke="#8cc0e8" stroke-width="0.5" rx="0" />
<line x1="527.4" y1="573.5" x2="530.6" y2="573.5" stroke="#7fb4de" stroke-width="0.5" />
<line x1="527.4" y1="576" x2="530.6" y2="576" stroke="#7fb4de" stroke-width="0.5" />
<line x1="527.4" y1="578.5" x2="530.6" y2="578.5" stroke="#7fb4de" stroke-width="0.5" />
<rect x="533.4" y="573.4" width="2.4" height="6.2" fill="#777" stroke="none" stroke-width="1" rx="0" />
<line x1="533" y1="576.5" x2="536.2" y2="576.5" stroke="#fff" stroke-width="0.4" />
<line x1="539.4" y1="6.9" x2="539.4" y2="583" stroke="#e0e0e0" stroke-width="0.6" />
<rect x="0" y="583.3" width="539.8" height="21.4" fill="#1d2a31" stroke="none" stroke-width="1" rx="0" />
<rect x="4.6" y="589.2" width="2.2" height="4.1" fill="#fff" stroke="none" stroke-width="1" rx="0" />
<rect x="7.2" y="589.2" width="2.2" height="4.1" fill="#fff" stroke="none" stroke-width="1" rx="0" />
<rect x="4.6" y="593.9" width="2.2" height="4.1" fill="#fff" stroke="none" stroke-width="1" rx="0" />
<rect x="7.2" y="593.9" width="2.2" height="4.1" fill="#fff" stroke="none" stroke-width="1" rx="0" />
<rect x="15" y="583.3" width="11" height="21.4" fill="#3a474f" stroke="none" stroke-width="1" rx="0" />
<line x1="15.4" y1="604" x2="25.6" y2="604" stroke="#7fb6e8" stroke-width="1" />
<rect x="17.4" y="588.4" width="6.4" height="10.6" fill="#f3cf55" stroke="none" stroke-width="1" rx="0" />
<rect x="18.2" y="593.6" width="4.8" height="5.4" fill="#8fae4a" stroke="none" stroke-width="1" rx="0" />
<rect x="17.4" y="588.4" width="6.4" height="2.2" fill="#e6b93a" stroke="none" stroke-width="1" rx="0" />
<ellipse cx="35.4" cy="594" rx="2.6" ry="5" fill="none" stroke="#1fb0e8" stroke-width="1.6"/>
<path d="M35.8 594.6 l2.6 0.6 l-0.4 3.4 q-1.6 1 -2.8 -0.4 z" fill="#fff" stroke="none" stroke-width="0" />
<ellipse cx="48.6" cy="594" rx="2.6" ry="4.6" fill="none" stroke="#d02a20" stroke-width="1.5"/>
<path d="M48.2 589.6 l1.6 2 l-1.4 2.4" fill="none" stroke="#e03a28" stroke-width="1" />
<line x1="45.6" y1="603.8" x2="52" y2="603.8" stroke="#6a8aa8" stroke-width="0.8" />
<rect x="58.6" y="588.6" width="6.4" height="10.8" fill="#2a68e8" stroke="none" stroke-width="1" rx="0.8" />
<path d="M60.6 591 h2.2 M61.7 591 v3.2 M60.6 596.6 l1.2 -1.6 l1.2 1.6" fill="none" stroke="#fff" stroke-width="0.7" />
<line x1="57.8" y1="603.8" x2="65.6" y2="603.8" stroke="#6a8aa8" stroke-width="0.8" />
<rect x="72.6" y="588.8" width="6" height="10.4" fill="#e8f2e0" stroke="none" stroke-width="1" rx="0.6" />
<path d="M73.8 591 h3.4 l-3.4 5.6 h3.6" fill="none" stroke="#2f9e44" stroke-width="1.1" />
<line x1="71.4" y1="603.8" x2="80" y2="603.8" stroke="#6a8aa8" stroke-width="0.8" />
<path d="M469 595.2 l1.2 -2.2 l1.2 2.2" fill="none" stroke="#e8e8e8" stroke-width="0.6" />
<rect x="476" y="590.2" width="4.2" height="6.2" fill="none" stroke="#f0f0f0" stroke-width="0.8" rx="0" />
<line x1="477" y1="598" x2="479.4" y2="598" stroke="#f0f0f0" stroke-width="0.7" />
<path d="M483.4 592.6 v3 h0.8 l1.2 1.6 v-6.2 l-1.2 1.6 z" fill="#bbb" stroke="#bbb" stroke-width="0.4" />
<text x="488.4" y="597.1" textLength="5.6" lengthAdjust="spacingAndGlyphs" fill="#ffffff" stroke="#ffffff" stroke-width="0.18" font-size="6.6" font-family="Liberation Sans, 'Noto Sans CJK SC', sans-serif" >英</text>
<rect x="497.2" y="590" width="5" height="8.2" fill="#e8e8e8" stroke="none" stroke-width="1" rx="0.5" />
<line x1="497.9" y1="592" x2="501.5" y2="592" stroke="#1d2a31" stroke-width="0.6" />
<line x1="497.9" y1="594" x2="501.5" y2="594" stroke="#1d2a31" stroke-width="0.6" />
<line x1="497.9" y1="596" x2="501.5" y2="596" stroke="#1d2a31" stroke-width="0.6" />
<text x="510" y="592.2" textLength="9" lengthAdjust="spacingAndGlyphs" fill="#f4f4f4" stroke="#f4f4f4" stroke-width="0.18" font-size="6.38" font-family="Liberation Sans, 'Noto Sans CJK SC', sans-serif" >17:31</text>
<text x="506" y="601.8" textLength="17" lengthAdjust="spacingAndGlyphs" fill="#f4f4f4" stroke="#f4f4f4" stroke-width="0.18" font-size="6.38" font-family="Liberation Sans, 'Noto Sans CJK SC', sans-serif" >2021/3/25</text>
<path d="M528.2 590.4 h5.4 v5.6 h-1.8 l-0.9 1.8 l-0.9 -1.8 h-1.8 z" fill="none" stroke="#f0f0f0" stroke-width="0.7" />
</svg>
<svg id="cad" width="1110" height="897" viewBox="0 0 1110 897">
<rect x="553.6" y="6.9" width="539.8" height="597.8" fill="#1f2328" stroke="none" stroke-width="1" rx="0" />
<rect x="568.8" y="12" width="509.8" height="590.5" fill="none" stroke="#b82ab8" stroke-width="1.4" rx="0" />
<rect x="589.7" y="26.1" width="479.9" height="562" fill="none" stroke="#cccc55" stroke-width="1.4" rx="0" />
<rect x="698" y="125" width="13.5" height="102" fill="#11114c" stroke="none" stroke-width="1" rx="0" />
<line x1="698" y1="137" x2="711.5" y2="137" stroke="#1818e0" stroke-width="1.6" />
<line x1="698" y1="147.5" x2="711.5" y2="147.5" stroke="#1818e0" stroke-width="1.6" />
<line x1="698" y1="172.7" x2="711.5" y2="172.7" stroke="#1818e0" stroke-width="1.6" />
<line x1="698" y1="197" x2="711.5" y2="197" stroke="#1818e0" stroke-width="1.6" />
<line x1="690" y1="131" x2="690" y2="270" stroke="#ffffff" stroke-width="1.3" />
<line x1="697.5" y1="125" x2="697.5" y2="270" stroke="#ffffff" stroke-width="1.3" />
<line x1="690" y1="130.4" x2="697.5" y2="130.4" stroke="#ffffff" stroke-width="1.6" />
<line x1="690" y1="147.5" x2="697.5" y2="147.5" stroke="#ffffff" stroke-width="1.6" />
<line x1="690" y1="166.4" x2="697.5" y2="166.4" stroke="#ffffff" stroke-width="1.6" />
<line x1="690" y1="184.4" x2="697.5" y2="184.4" stroke="#ffffff" stroke-width="1.6" />
<line x1="690" y1="202.4" x2="697.5" y2="202.4" stroke="#ffffff" stroke-width="1.6" />
<line x1="690" y1="221.4" x2="697.5" y2="221.4" stroke="#ffffff" stroke-width="1.6" />
<path d="M712.5 219 L712.5 123.2 L682 123.2 L683 129.5 L690 133" fill="none" stroke="#ffffff" stroke-width="1.3" stroke-linejoin="round" />
<line x1="691" y1="126.5" x2="697" y2="126.5" stroke="#ffffff" stroke-width="1" />
<line x1="691" y1="128.5" x2="697" y2="128.5" stroke="#ffffff" stroke-width="1" />
<rect x="683.5" y="124.5" width="5.5" height="4.5" fill="#14148c" stroke="none" stroke-width="1" rx="0" />
<line x1="712.5" y1="136.9" x2="871.7" y2="136.9" stroke="#ffffff" stroke-width="1.3" />
<rect x="712.5" y="143.9" width="159.2" height="20.6" fill="#f4f4f4" stroke="none" stroke-width="1" rx="0" />
<rect x="714.6" y="146.7" width="15.5" height="15" fill="#1f2328" stroke="none" stroke-width="1" rx="0" />
<rect x="731.7" y="146.7" width="2.2" height="15" fill="#8c8c8c" stroke="none" stroke-width="1" rx="0" />
<rect x="736.4" y="146.7" width="17.2" height="15" fill="#1f2328" stroke="none" stroke-width="1" rx="0" />
<rect x="755.2" y="146.7" width="2.2" height="15" fill="#8c8c8c" stroke="none" stroke-width="1" rx="0" />
<rect x="759.9" y="146.7" width="17.2" height="15" fill="#1f2328" stroke="none" stroke-width="1" rx="0" />
<rect x="778.7" y="146.7" width="2.2" height="15" fill="#8c8c8c" stroke="none" stroke-width="1" rx="0" />
<rect x="783.4" y="146.7" width="17.2" height="15" fill="#1f2328" stroke="none" stroke-width="1" rx="0" />
<rect x="802.2" y="146.7" width="2.2" height="15" fill="#8c8c8c" stroke="none" stroke-width="1" rx="0" />
<rect x="806.9" y="146.7" width="17.2" height="15" fill="#1f2328" stroke="none" stroke-width="1" rx="0" />
<rect x="825.7" y="146.7" width="2.2" height="15" fill="#8c8c8c" stroke="none" stroke-width="1" rx="0" />
<rect x="830.4" y="146.7" width="17.2" height="15" fill="#1f2328" stroke="none" stroke-width="1" rx="0" />
<rect x="849.2" y="146.7" width="2.2" height="15" fill="#8c8c8c" stroke="none" stroke-width="1" rx="0" />
<rect x="853.9" y="146.7" width="17.2" height="15" fill="#1f2328" stroke="none" stroke-width="1" rx="0" />
<rect x="712.5" y="171.3" width="159.2" height="20.6" fill="#f4f4f4" stroke="none" stroke-width="1" rx="0" />
<rect x="714.6" y="174.2" width="15.5" height="15" fill="#1f2328" stroke="none" stroke-width="1" rx="0" />
<rect x="731.7" y="174.2" width="2.2" height="15" fill="#8c8c8c" stroke="none" stroke-width="1" rx="0" />
<rect x="736.4" y="174.2" width="17.2" height="15" fill="#1f2328" stroke="none" stroke-width="1" rx="0" />
<rect x="755.2" y="174.2" width="2.2" height="15" fill="#8c8c8c" stroke="none" stroke-width="1" rx="0" />
<rect x="759.9" y="174.2" width="17.2" height="15" fill="#1f2328" stroke="none" stroke-width="1" rx="0" />
<rect x="778.7" y="174.2" width="2.2" height="15" fill="#8c8c8c" stroke="none" stroke-width="1" rx="0" />
<rect x="783.4" y="174.2" width="17.2" height="15" fill="#1f2328" stroke="none" stroke-width="1" rx="0" />
<rect x="802.2" y="174.2" width="2.2" height="15" fill="#8c8c8c" stroke="none" stroke-width="1" rx="0" />
<rect x="806.9" y="174.2" width="17.2" height="15" fill="#1f2328" stroke="none" stroke-width="1" rx="0" />
<rect x="825.7" y="174.2" width="2.2" height="15" fill="#8c8c8c" stroke="none" stroke-width="1" rx="0" />
<rect x="830.4" y="174.2" width="17.2" height="15" fill="#1f2328" stroke="none" stroke-width="1" rx="0" />
<rect x="849.2" y="174.2" width="2.2" height="15" fill="#8c8c8c" stroke="none" stroke-width="1" rx="0" />
<rect x="853.9" y="174.2" width="17.2" height="15" fill="#1f2328" stroke="none" stroke-width="1" rx="0" />
<rect x="712.5" y="198.8" width="159.2" height="20.6" fill="#f4f4f4" stroke="none" stroke-width="1" rx="0" />
<rect x="714.6" y="201.6" width="15.5" height="15" fill="#1f2328" stroke="none" stroke-width="1" rx="0" />
<rect x="731.7" y="201.6" width="2.2" height="15" fill="#8c8c8c" stroke="none" stroke-width="1" rx="0" />
<rect x="736.4" y="201.6" width="17.2" height="15" fill="#1f2328" stroke="none" stroke-width="1" rx="0" />
<rect x="755.2" y="201.6" width="2.2" height="15" fill="#8c8c8c" stroke="none" stroke-width="1" rx="0" />
<rect x="759.9" y="201.6" width="17.2" height="15" fill="#1f2328" stroke="none" stroke-width="1" rx="0" />
<rect x="778.7" y="201.6" width="2.2" height="15" fill="#8c8c8c" stroke="none" stroke-width="1" rx="0" />
<rect x="783.4" y="201.6" width="17.2" height="15" fill="#1f2328" stroke="none" stroke-width="1" rx="0" />
<rect x="802.2" y="201.6" width="2.2" height="15" fill="#8c8c8c" stroke="none" stroke-width="1" rx="0" />
<rect x="806.9" y="201.6" width="17.2" height="15" fill="#1f2328" stroke="none" stroke-width="1" rx="0" />
<rect x="825.7" y="201.6" width="2.2" height="15" fill="#8c8c8c" stroke="none" stroke-width="1" rx="0" />
<rect x="830.4" y="201.6" width="17.2" height="15" fill="#1f2328" stroke="none" stroke-width="1" rx="0" />
<rect x="849.2" y="201.6" width="2.2" height="15" fill="#8c8c8c" stroke="none" stroke-width="1" rx="0" />
<rect x="853.9" y="201.6" width="17.2" height="15" fill="#1f2328" stroke="none" stroke-width="1" rx="0" />
<line x1="871.7" y1="136.9" x2="871.7" y2="219" stroke="#ffffff" stroke-width="1.3" />
<rect x="712.5" y="219.5" width="171.5" height="7.3" fill="#1212d2" stroke="none" stroke-width="1" rx="0" />
<rect x="698" y="219.5" width="14.5" height="7.3" fill="#1212b4" stroke="none" stroke-width="1" rx="0" />
<path d="M871.7 136.9 L877.8 136.9 L878.8 128.5 Q879 126.8 881 126.8 L884 126.8 Q887.3 127 887.5 132 L887.5 233" fill="none" stroke="#ffffff" stroke-width="1.3" />
<line x1="884.2" y1="128" x2="884.2" y2="226" stroke="#1818e0" stroke-width="1.8" />
<line x1="886" y1="140" x2="886" y2="232" stroke="#b0b0ff" stroke-width="0.8" />
<line x1="860.5" y1="208.5" x2="860.5" y2="214.5" stroke="#ffffff" stroke-width="1.2" />
<line x1="698" y1="228.3" x2="884" y2="228.3" stroke="#ffffff" stroke-width="1.2" stroke-dasharray="14 2 3 2"/>
<line x1="690" y1="233.3" x2="887.5" y2="233.3" stroke="#ffffff" stroke-width="1.3" />
<line x1="690" y1="236" x2="887.5" y2="236" stroke="#ffffff" stroke-width="1.2" />
<rect x="698" y="236.6" width="72" height="12.9" fill="#1515b4" stroke="none" stroke-width="1" rx="0" opacity="0.8"/>
<rect x="770" y="236.6" width="76" height="12.9" fill="#101070" stroke="none" stroke-width="1" rx="0" opacity="0.6"/>
<rect x="774.5" y="241" width="52.5" height="4.8" fill="#1616c0" stroke="none" stroke-width="1" rx="0" />
<rect x="810" y="237" width="29" height="4" fill="#1616c0" stroke="none" stroke-width="1" rx="0" opacity="0.8"/>
<line x1="698" y1="249.5" x2="848" y2="249.5" stroke="#3a3aff" stroke-width="1.3" stroke-dasharray="1.5 2"/>
<ellipse cx="738" cy="243.5" rx="14" ry="3" fill="none" stroke="#f01020" stroke-width="1.1"/>
<line x1="716" y1="238" x2="728" y2="246" stroke="#f01020" stroke-width="1" />
<line x1="745" y1="238" x2="757" y2="247" stroke="#f01020" stroke-width="1" />
<rect x="684.6" y="237" width="13.4" height="32.4" fill="none" stroke="#ffffff" stroke-width="1.3" rx="0" />
<line x1="684.9" y1="239.5" x2="688.8" y2="247.8" stroke="#ffffff" stroke-width="1.1" />
<line x1="688.8" y1="239.5" x2="684.9" y2="247.8" stroke="#ffffff" stroke-width="1.1" />
<rect x="685.5" y="256.8" width="67.5" height="5.4" fill="none" stroke="#ffffff" stroke-width="1.2" rx="1.2" />
<rect x="685.5" y="276.6" width="67.5" height="7.2" fill="none" stroke="#ffffff" stroke-width="1.2" rx="1.2" />
<line x1="674.7" y1="268.5" x2="850" y2="268.5" stroke="#d8d8d8" stroke-width="1.2" />
<line x1="739.5" y1="237" x2="739.5" y2="268.5" stroke="#ffffff" stroke-width="1.3" />
<line x1="745" y1="237" x2="745" y2="268.5" stroke="#ffffff" stroke-width="1.3" />
<line x1="773.8" y1="237" x2="773.8" y2="268.5" stroke="#ffffff" stroke-width="1.3" />
<line x1="828" y1="237" x2="828" y2="268.5" stroke="#ffffff" stroke-width="1.3" />
<path d="M774 268 l-1.5 -2.5 h3 z M828 268 l-1.5 -2.5 h3 z M690 270 l-1.5 -2.5 h3 z" fill="#ffffff" stroke="#ffffff" stroke-width="0.8" />
<line x1="765.7" y1="235" x2="754.9" y2="257.7" stroke="#ffffff" stroke-width="1.1" />
<line x1="768" y1="236" x2="757" y2="258.5" stroke="#ffffff" stroke-width="1.1" />
<path d="M729 252 L729 248 L733 248 L733 252 M741 252 L741 248 L746.5 248 L746.5 253" fill="none" stroke="#ffffff" stroke-width="1.4" />
<rect x="718.5" y="255" width="8.5" height="5" fill="none" stroke="#2a2aff" stroke-width="1.2" rx="0" />
<rect x="718.5" y="260" width="8.5" height="5" fill="none" stroke="#2a2aff" stroke-width="1.2" rx="0" />
<ellipse cx="718.5" cy="272.5" rx="1.3" ry="3" fill="none" stroke="#f01020" stroke-width="1"/>
<ellipse cx="727" cy="273" rx="1.3" ry="3.3" fill="none" stroke="#f01020" stroke-width="1"/>
<line x1="732" y1="271.2" x2="748.5" y2="270" stroke="#f0f000" stroke-width="1.8" />
<line x1="744" y1="270.5" x2="749" y2="268.5" stroke="#f0f000" stroke-width="1.5" />
<rect x="694.5" y="271" width="19.5" height="4.7" fill="#8a8a8a" stroke="none" stroke-width="1" rx="0" />
<line x1="696" y1="273.4" x2="712.5" y2="273.4" stroke="#d02020" stroke-width="1.4" stroke-dasharray="2 0.7"/>
<rect x="732" y="284" width="13" height="2.5" fill="none" stroke="#ffffff" stroke-width="1" rx="0" />
<line x1="839.3" y1="234.2" x2="850" y2="259.5" stroke="#ffffff" stroke-width="1.1" />
<line x1="841.5" y1="234.2" x2="852" y2="259.5" stroke="#ffffff" stroke-width="1.1" />
<rect x="848.3" y="240.5" width="7.2" height="11.8" fill="none" stroke="#ffffff" stroke-width="1.2" rx="0" />
<path d="M851 261.3 L855.5 261.3 L863.6 280.2 L861 286.5 L851 279.3 Z" fill="none" stroke="#ffffff" stroke-width="1.2" stroke-linejoin="round" />
<rect x="860" y="280.2" width="3.6" height="6.3" fill="none" stroke="#ffffff" stroke-width="1" rx="0" />
<rect x="848.3" y="262" width="3.7" height="8" fill="none" stroke="#ffffff" stroke-width="1" rx="0" />
<rect x="867.2" y="235" width="3.6" height="13.6" fill="none" stroke="#ffffff" stroke-width="1.1" rx="0" />
<line x1="869" y1="236" x2="869" y2="248" stroke="#c0c0c0" stroke-width="0.8" />
<path d="M882 220 l3 3 l-3 3 l3 3" fill="none" stroke="#ffffff" stroke-width="1" />
<line x1="803.2" y1="218" x2="803.2" y2="315" stroke="#f01020" stroke-width="1" stroke-dasharray="9 2 2 2"/>
<line x1="851" y1="216" x2="851" y2="240" stroke="#f01020" stroke-width="1" />
<line x1="812" y1="222" x2="813" y2="240" stroke="#f01020" stroke-width="1" stroke-dasharray="3 1.5"/>
<line x1="846" y1="232" x2="854" y2="236" stroke="#e0a000" stroke-width="1.2" />
<line x1="718" y1="228" x2="730" y2="232" stroke="#f01020" stroke-width="1" />
<ellipse cx="657.3" cy="278.2" rx="19.1" ry="30.4" fill="none" stroke="#dc1edc" stroke-width="2.1"/>
<ellipse cx="657.3" cy="278.2" rx="9.8" ry="15.5" fill="none" stroke="#dc1edc" stroke-width="2"/>
<ellipse cx="657.3" cy="278.2" rx="3.7" ry="6.5" fill="none" stroke="#dc1edc" stroke-width="1.4"/>
<ellipse cx="667" cy="278.2" rx="0.9" ry="1.3" fill="#dc1edc"/>
<ellipse cx="664.2" cy="289.2" rx="0.9" ry="1.3" fill="#dc1edc"/>
<ellipse cx="657.3" cy="293.7" rx="0.9" ry="1.3" fill="#dc1edc"/>
<ellipse cx="650.4" cy="289.2" rx="0.9" ry="1.3" fill="#dc1edc"/>
<ellipse cx="647.5" cy="278.2" rx="0.9" ry="1.3" fill="#dc1edc"/>
<ellipse cx="650.4" cy="267.2" rx="0.9" ry="1.3" fill="#dc1edc"/>
<ellipse cx="657.3" cy="262.7" rx="0.9" ry="1.3" fill="#dc1edc"/>
<ellipse cx="664.2" cy="267.2" rx="0.9" ry="1.3" fill="#dc1edc"/>
<ellipse cx="778.9" cy="282.7" rx="18.5" ry="30" fill="none" stroke="#dc1edc" stroke-width="2.1"/>
<ellipse cx="778.9" cy="282.7" rx="9.4" ry="15.3" fill="none" stroke="#dc1edc" stroke-width="2"/>
<ellipse cx="778.9" cy="282.7" rx="3.6" ry="6.4" fill="none" stroke="#dc1edc" stroke-width="1.4"/>
<ellipse cx="788.4" cy="282.7" rx="0.9" ry="1.3" fill="#dc1edc"/>
<ellipse cx="785.6" cy="293.5" rx="0.9" ry="1.3" fill="#dc1edc"/>
<ellipse cx="778.9" cy="298" rx="0.9" ry="1.3" fill="#dc1edc"/>
<ellipse cx="772.2" cy="293.5" rx="0.9" ry="1.3" fill="#dc1edc"/>
<ellipse cx="769.4" cy="282.7" rx="0.9" ry="1.3" fill="#dc1edc"/>
<ellipse cx="772.2" cy="271.9" rx="0.9" ry="1.3" fill="#dc1edc"/>
<ellipse cx="778.9" cy="267.4" rx="0.9" ry="1.3" fill="#dc1edc"/>
<ellipse cx="785.6" cy="271.9" rx="0.9" ry="1.3" fill="#dc1edc"/>
<ellipse cx="826.3" cy="282.7" rx="18.5" ry="30" fill="none" stroke="#dc1edc" stroke-width="2.1"/>
<ellipse cx="826.3" cy="282.7" rx="9.4" ry="15.3" fill="none" stroke="#dc1edc" stroke-width="2"/>
<ellipse cx="826.3" cy="282.7" rx="3.6" ry="6.4" fill="none" stroke="#dc1edc" stroke-width="1.4"/>
<ellipse cx="835.8" cy="282.7" rx="0.9" ry="1.3" fill="#dc1edc"/>
<ellipse cx="833" cy="293.5" rx="0.9" ry="1.3" fill="#dc1edc"/>
<ellipse cx="826.3" cy="298" rx="0.9" ry="1.3" fill="#dc1edc"/>
<ellipse cx="819.6" cy="293.5" rx="0.9" ry="1.3" fill="#dc1edc"/>
<ellipse cx="816.8" cy="282.7" rx="0.9" ry="1.3" fill="#dc1edc"/>
<ellipse cx="819.6" cy="271.9" rx="0.9" ry="1.3" fill="#dc1edc"/>
<ellipse cx="826.3" cy="267.4" rx="0.9" ry="1.3" fill="#dc1edc"/>
<ellipse cx="833" cy="271.9" rx="0.9" ry="1.3" fill="#dc1edc"/>
<line x1="634.6" y1="278.5" x2="678" y2="278.5" stroke="#f01020" stroke-width="1.3" stroke-dasharray="8 1.5 2 1.5"/>
<line x1="657.2" y1="246" x2="657.2" y2="310" stroke="#f01020" stroke-width="1.2" stroke-dasharray="8 1.5 2 1.5"/>
<line x1="760" y1="282.7" x2="850" y2="282.7" stroke="#f01020" stroke-width="1.3" stroke-dasharray="8 1.5 2 1.5"/>
<line x1="778.9" y1="252" x2="778.9" y2="312" stroke="#f01020" stroke-width="1.1" stroke-dasharray="8 1.5 2 1.5"/>
<line x1="826.3" y1="252" x2="826.3" y2="312" stroke="#f01020" stroke-width="1.1" stroke-dasharray="8 1.5 2 1.5"/>
<path d="M608.2 223 L621.6 154.5 Q622.5 150 627 147.5 L632 144.7 L670 144.7 Q676.5 146 678.5 154 L680.2 160" fill="none" stroke="#dc1edc" stroke-width="1.6" />
<path d="M610.2 223 L623.4 159 L627 154.6 L672.2 154.6" fill="none" stroke="#dc1edc" stroke-width="1.5" />
<path d="M612.4 223 L625 161" fill="none" stroke="#dc1edc" stroke-width="1.2" />
<path d="M627 159 L650 159 L652 162 L652 195 L624 212 L620.6 209 L625.2 161 Z" fill="none" stroke="#dc1edc" stroke-width="1.5" />
<line x1="654.7" y1="156" x2="654.7" y2="218" stroke="#dc1edc" stroke-width="1.5" />
<line x1="654.7" y1="218" x2="654.7" y2="237" stroke="#e0206a" stroke-width="1.1" />
<rect x="657.2" y="158.6" width="13.5" height="39.6" fill="none" stroke="#dc1edc" stroke-width="1.5" rx="2" />
<rect x="658.8" y="160.5" width="10.5" height="29.5" fill="none" stroke="#dc1edc" stroke-width="1.2" rx="1.2" />
<line x1="658" y1="191.5" x2="670" y2="191.5" stroke="#dc1edc" stroke-width="1.5" />
<line x1="672.2" y1="154.6" x2="672.2" y2="250" stroke="#dc1edc" stroke-width="1.5" />
<line x1="674.3" y1="165" x2="674.3" y2="250" stroke="#dc1edc" stroke-width="1.5" />
<rect x="679" y="160" width="5" height="19" fill="none" stroke="#dc1edc" stroke-width="1.5" rx="0" />
<line x1="679.3" y1="179" x2="679.3" y2="250" stroke="#dc1edc" stroke-width="1.5" />
<line x1="682.6" y1="179" x2="682.6" y2="250" stroke="#dc1edc" stroke-width="1.5" />
<rect x="644.6" y="204.7" width="9.1" height="10.5" fill="#dc1edc" stroke="none" stroke-width="1" rx="0" />
<line x1="646" y1="208" x2="652" y2="208" stroke="#1f2328" stroke-width="0.8" />
<line x1="646" y1="212" x2="652" y2="212" stroke="#1f2328" stroke-width="0.8" />
<line x1="678.7" y1="165" x2="677.6" y2="179" stroke="#20d0d0" stroke-width="1.2" />
<line x1="608.4" y1="218" x2="608.4" y2="245" stroke="#dc1edc" stroke-width="1.5" />
<line x1="618.4" y1="215" x2="618.4" y2="273" stroke="#dc1edc" stroke-width="1.5" />
<line x1="619.5" y1="232.3" x2="654.6" y2="224.5" stroke="#dc1edc" stroke-width="1.5" />
<line x1="619.5" y1="235.6" x2="654.6" y2="227.8" stroke="#dc1edc" stroke-width="1.5" />
<line x1="655.7" y1="223.4" x2="673.6" y2="223.4" stroke="#dc1edc" stroke-width="1.5" />
<line x1="655.7" y1="226.2" x2="673.6" y2="226.2" stroke="#dc1edc" stroke-width="1.5" />
<line x1="655.7" y1="229" x2="673.6" y2="229" stroke="#dc1edc" stroke-width="1.5" />
<line x1="655.7" y1="231.4" x2="673.6" y2="231.4" stroke="#dc1edc" stroke-width="1.5" />
<line x1="608.4" y1="245" x2="640" y2="245" stroke="#dc1edc" stroke-width="1.5" />
<rect x="611" y="251.8" width="7" height="15.6" fill="none" stroke="#dc1edc" stroke-width="1.5" rx="0" />
<line x1="613.5" y1="252" x2="616.5" y2="252" stroke="#ffd0ff" stroke-width="1.6" />
<line x1="618.4" y1="252.3" x2="637" y2="252.3" stroke="#dc1edc" stroke-width="1.5" />
<line x1="618.4" y1="256" x2="637" y2="256" stroke="#dc1edc" stroke-width="1.5" />
<line x1="618.4" y1="263" x2="637" y2="263" stroke="#dc1edc" stroke-width="1.5" />
<line x1="618.4" y1="266.8" x2="637" y2="266.8" stroke="#dc1edc" stroke-width="1.5" />
<line x1="618.4" y1="270.2" x2="637" y2="270.2" stroke="#dc1edc" stroke-width="1.5" />
<line x1="618.4" y1="273" x2="637" y2="273" stroke="#dc1edc" stroke-width="1.5" />
<line x1="613.4" y1="275.2" x2="642.4" y2="299.7" stroke="#dc1edc" stroke-width="1.5" />
<line x1="608.4" y1="245" x2="613.4" y2="275.2" stroke="#dc1edc" stroke-width="1.4" />
<path d="M640 252 Q641 238 650 235.6 L667 235.6 Q676 238 678.2 252" fill="none" stroke="#dc1edc" stroke-width="1.6" />
<path d="M637 258 Q639 240 650 238.4 L666 238.4" fill="none" stroke="#dc1edc" stroke-width="1.4" />
<path d="M672.5 237.3 Q676 240 678 250 L682.5 273" fill="none" stroke="#dc1edc" stroke-width="2.6" />
<ellipse cx="678.5" cy="243" rx="1.8" ry="6" fill="none" stroke="#dc1edc" stroke-width="1.5"/>
<line x1="674.5" y1="268.5" x2="690" y2="268.5" stroke="#ffffff" stroke-width="1.2" />
<path d="M610.6 249.6 L607.4 251.5 L607.4 258 L609 259.6" fill="none" stroke="#10e010" stroke-width="1.2" />
<line x1="606.7" y1="265" x2="606.7" y2="356.8" stroke="#10e010" stroke-width="1.3" />
<line x1="606.7" y1="356.8" x2="887.6" y2="356.8" stroke="#10e010" stroke-width="1.4" />
<line x1="657.2" y1="310" x2="657.2" y2="358.5" stroke="#10e010" stroke-width="1.3" />
<line x1="779.3" y1="313" x2="779.3" y2="358.5" stroke="#10e010" stroke-width="1.3" />
<line x1="826.3" y1="313" x2="826.3" y2="358.5" stroke="#10e010" stroke-width="1.3" />
<line x1="887.6" y1="232" x2="887.6" y2="358.5" stroke="#10e010" stroke-width="1.3" />
<line x1="886" y1="126.8" x2="914" y2="126.8" stroke="#10e010" stroke-width="1.4" />
<line x1="914" y1="126.8" x2="914" y2="311.7" stroke="#10e010" stroke-width="1.4" />
<line x1="825.8" y1="311.7" x2="914" y2="311.7" stroke="#10e010" stroke-width="1.4" />
<text x="631.4" y="355.7" fill="#10e010" font-size="5" font-family="Liberation Sans, sans-serif" text-anchor="middle" stroke="#10e010" stroke-width="0.2">1440</text>
<text x="718" y="355.7" fill="#10e010" font-size="5" font-family="Liberation Sans, sans-serif" text-anchor="middle" stroke="#10e010" stroke-width="0.2">3750</text>
<text x="803" y="355.7" fill="#10e010" font-size="5" font-family="Liberation Sans, sans-serif" text-anchor="middle" stroke="#10e010" stroke-width="0.2">1350</text>
<text x="852" y="355.7" fill="#10e010" font-size="5" font-family="Liberation Sans, sans-serif" text-anchor="middle" stroke="#10e010" stroke-width="0.2">1850</text>
<text transform="translate(912.6 216.5) rotate(-90)" fill="#10e010" font-size="4.4" font-family="Liberation Sans, sans-serif" text-anchor="middle">3020</text>
<rect x="695.2" y="85.5" width="2.8" height="7" fill="#10e010" stroke="none" stroke-width="1" rx="0" />
<line x1="693.6" y1="94.3" x2="699" y2="94.3" stroke="#10e010" stroke-width="1.2" />
<line x1="699" y1="94.3" x2="709.8" y2="127.6" stroke="#10e010" stroke-width="1.1" />
<rect x="724.4" y="85.5" width="3.4" height="7" fill="#10e010" stroke="none" stroke-width="1" rx="0" />
<line x1="722.4" y1="94.3" x2="728.4" y2="94.3" stroke="#10e010" stroke-width="1.2" />
<line x1="722.4" y1="94.3" x2="705.3" y2="229.5" stroke="#10e010" stroke-width="1.1" />
<rect x="748.4" y="85.5" width="3" height="7" fill="#10e010" stroke="none" stroke-width="1" rx="0" />
<line x1="746.4" y1="94.3" x2="752" y2="94.3" stroke="#10e010" stroke-width="1.2" />
<line x1="746.4" y1="94.3" x2="729.6" y2="229.5" stroke="#10e010" stroke-width="1.1" />
<rect x="682" y="327.3" width="4.4" height="6.7" fill="#10e010" stroke="none" stroke-width="1" rx="0" />
<rect x="690" y="327.3" width="3.6" height="6.7" fill="#10e010" stroke="none" stroke-width="1" rx="0" />
<line x1="680" y1="335.2" x2="695.4" y2="335.2" stroke="#10e010" stroke-width="1.2" />
<line x1="695.4" y1="335.2" x2="718.8" y2="272" stroke="#10e010" stroke-width="1.1" />
<rect x="707.2" y="327.3" width="4.4" height="6.7" fill="#10e010" stroke="none" stroke-width="1" rx="0" />
<line x1="706.2" y1="335.2" x2="713.4" y2="335.2" stroke="#10e010" stroke-width="1.2" />
<line x1="713.4" y1="335.2" x2="727" y2="277.5" stroke="#10e010" stroke-width="1.1" />
<rect x="723.3" y="327.3" width="4.5" height="6.7" fill="#10e010" stroke="none" stroke-width="1" rx="0" />
<line x1="722.4" y1="335.2" x2="729.6" y2="335.2" stroke="#10e010" stroke-width="1.2" />
<line x1="729.6" y1="335.2" x2="740.5" y2="286.5" stroke="#10e010" stroke-width="1.1" />
<rect x="753" y="327.3" width="3.7" height="6.7" fill="#10e010" stroke="none" stroke-width="1" rx="0" />
<line x1="750.4" y1="335.2" x2="757.6" y2="335.2" stroke="#10e010" stroke-width="1.2" />
<line x1="750.4" y1="335.2" x2="741.4" y2="252.3" stroke="#10e010" stroke-width="1.1" />
<rect x="787.3" y="327.3" width="6" height="6.7" fill="#10e010" stroke="none" stroke-width="1" rx="0" />
<line x1="786" y1="335.2" x2="794.2" y2="335.2" stroke="#10e010" stroke-width="1.2" />
<line x1="786" y1="335.2" x2="773.5" y2="252" stroke="#10e010" stroke-width="1.1" />
<rect x="841.2" y="327.3" width="3.5" height="6.7" fill="#10e010" stroke="none" stroke-width="1" rx="0" />
<line x1="839.3" y1="335.2" x2="846.5" y2="335.2" stroke="#10e010" stroke-width="1.2" />
<line x1="846.5" y1="335.2" x2="861" y2="284.7" stroke="#10e010" stroke-width="1.1" />
<line x1="948" y1="98.1" x2="1032.4" y2="98.1" stroke="#10e010" stroke-width="1.5" />
<line x1="948" y1="98.1" x2="948" y2="131" stroke="#10e010" stroke-width="1.3" />
<line x1="1032.4" y1="98.1" x2="1032.4" y2="131" stroke="#10e010" stroke-width="1.3" />
<path d="M948 98.1 l2.5 -1 v2 z M1032.4 98.1 l-2.5 -1 v2 z" fill="#10e010" stroke="#10e010" stroke-width="0.6" />
<text x="989.5" y="97" fill="#10e010" font-size="4.8" font-family="Liberation Sans, sans-serif" text-anchor="middle" font-style="italic">2490</text>
<rect x="971.3" y="107.5" width="2.3" height="7.3" fill="#10e010" stroke="none" stroke-width="1" rx="0" />
<line x1="969" y1="115.6" x2="974.2" y2="115.6" stroke="#10e010" stroke-width="1.2" />
<path d="M970.2 115.8 Q965.5 124 963.5 139" fill="none" stroke="#10e010" stroke-width="1.1" />
<rect x="950.4" y="126" width="3" height="93" fill="#1515a0" stroke="none" stroke-width="1" rx="0" />
<line x1="948.6" y1="127" x2="948.6" y2="219" stroke="#e8e8ff" stroke-width="1.2" />
<line x1="954.7" y1="131" x2="954.7" y2="219" stroke="#ffffff" stroke-width="1.3" />
<path d="M948.6 128 Q948.6 122.8 951 122.8 Q953.2 122.8 953.2 128 L953.2 130.3 L955.6 130.3 L957.2 135" fill="none" stroke="#ffffff" stroke-width="1.2" />
<line x1="949.5" y1="128" x2="949.5" y2="134" stroke="#3030ff" stroke-width="1.4" />
<rect x="1027.8" y="126" width="3" height="93" fill="#1515a0" stroke="none" stroke-width="1" rx="0" />
<line x1="1032.6" y1="127" x2="1032.6" y2="219" stroke="#e8e8ff" stroke-width="1.2" />
<line x1="1026.5" y1="131" x2="1026.5" y2="219" stroke="#ffffff" stroke-width="1.3" />
<path d="M1032.6 128 Q1032.6 122.8 1030.2 122.8 Q1028 122.8 1028 128 L1028 130.3 L1025.6 130.3 L1024 135" fill="none" stroke="#ffffff" stroke-width="1.2" />
<line x1="1031.7" y1="128" x2="1031.7" y2="134" stroke="#3030ff" stroke-width="1.4" />
<line x1="957" y1="135" x2="1024.2" y2="135" stroke="#ffffff" stroke-width="1.3" />
<rect x="954.7" y="141.6" width="14.3" height="17.4" fill="none" stroke="#ffffff" stroke-width="1.2" rx="0" />
<rect x="973.5" y="141.6" width="15.2" height="17.4" fill="none" stroke="#ffffff" stroke-width="1.2" rx="0" />
<rect x="992.4" y="141.6" width="15.2" height="17.4" fill="none" stroke="#ffffff" stroke-width="1.2" rx="0" />
<rect x="1012.1" y="141.6" width="14.4" height="17.4" fill="none" stroke="#ffffff" stroke-width="1.2" rx="0" />
<line x1="954.7" y1="161.9" x2="1026.5" y2="161.9" stroke="#ffffff" stroke-width="1.1" />
<rect x="954.7" y="168.4" width="14.3" height="17.4" fill="none" stroke="#ffffff" stroke-width="1.2" rx="0" />
<rect x="973.5" y="168.4" width="15.2" height="17.4" fill="none" stroke="#ffffff" stroke-width="1.2" rx="0" />
<rect x="992.4" y="168.4" width="15.2" height="17.4" fill="none" stroke="#ffffff" stroke-width="1.2" rx="0" />
<rect x="1012.1" y="168.4" width="14.4" height="17.4" fill="none" stroke="#ffffff" stroke-width="1.2" rx="0" />
<line x1="954.7" y1="188.7" x2="1026.5" y2="188.7" stroke="#ffffff" stroke-width="1.1" />
<rect x="954.7" y="195.2" width="14.3" height="16.5" fill="none" stroke="#ffffff" stroke-width="1.2" rx="0" />
<rect x="973.5" y="195.2" width="15.2" height="16.5" fill="none" stroke="#ffffff" stroke-width="1.2" rx="0" />
<rect x="992.4" y="195.2" width="15.2" height="16.5" fill="none" stroke="#ffffff" stroke-width="1.2" rx="0" />
<rect x="1012.1" y="195.2" width="14.4" height="16.5" fill="none" stroke="#ffffff" stroke-width="1.2" rx="0" />
<line x1="954.7" y1="214.6" x2="1026.5" y2="214.6" stroke="#ffffff" stroke-width="1.1" />
<rect x="948.7" y="214.8" width="84.3" height="4.8" fill="#1414d0" stroke="none" stroke-width="1" rx="0" />
<line x1="990.6" y1="121" x2="990.6" y2="303.7" stroke="#f01020" stroke-width="1.1" stroke-dasharray="10 2 2 2"/>
<line x1="947.2" y1="219.6" x2="947.2" y2="329.5" stroke="#10e010" stroke-width="1.3" />
<line x1="1033.6" y1="219.6" x2="1033.6" y2="329.5" stroke="#10e010" stroke-width="1.3" />
<line x1="947.2" y1="328" x2="1033.6" y2="328" stroke="#10e010" stroke-width="1.5" />
<text x="990.5" y="327" fill="#10e010" font-size="4.8" font-family="Liberation Sans, sans-serif" text-anchor="middle" font-style="italic">2490</text>
<line x1="948.7" y1="221.2" x2="1033" y2="221.2" stroke="#ffffff" stroke-width="1.2" />
<line x1="948.7" y1="223.6" x2="1033" y2="223.6" stroke="#ffffff" stroke-width="1" />
<line x1="948.9" y1="219.6" x2="948.9" y2="254.6" stroke="#9090ff" stroke-width="1.2" />
<line x1="950.3" y1="219.6" x2="950.3" y2="254.6" stroke="#ffffff" stroke-width="0.9" />
<path d="M951 221.8 L967.4 221.8 L967.4 246.8 L953.4 246.8 L951 243.7 Z" fill="none" stroke="#ffffff" stroke-width="1.2" stroke-linejoin="round" />
<line x1="951.8" y1="225.7" x2="966.6" y2="230.4" stroke="#ffffff" stroke-width="1" />
<line x1="952" y1="231" x2="958" y2="233.5" stroke="#3030ff" stroke-width="1.2" />
<line x1="953.4" y1="236.7" x2="953.4" y2="245.2" stroke="#ffffff" stroke-width="1.6" />
<line x1="957.3" y1="236.7" x2="957.3" y2="245.2" stroke="#ffffff" stroke-width="1.6" />
<line x1="961.2" y1="236.7" x2="961.2" y2="245.2" stroke="#ffffff" stroke-width="1.6" />
<line x1="965.1" y1="236.7" x2="965.1" y2="245.2" stroke="#ffffff" stroke-width="1.6" />
<line x1="955.3" y1="238" x2="955.3" y2="244.5" stroke="#f01020" stroke-width="1" />
<line x1="959.2" y1="238" x2="959.2" y2="244.5" stroke="#f01020" stroke-width="1" />
<line x1="963.1" y1="238" x2="963.1" y2="244.5" stroke="#f01020" stroke-width="1" />
<rect x="971.3" y="221.8" width="3.9" height="7.1" fill="none" stroke="#ffffff" stroke-width="0.9" rx="0" />
<line x1="973.2" y1="222.5" x2="973.2" y2="228.5" stroke="#f01020" stroke-width="1.3" />
<line x1="969.8" y1="239" x2="969.8" y2="278" stroke="#ffffff" stroke-width="1.1" />
<line x1="971.6" y1="239" x2="971.6" y2="278" stroke="#ffffff" stroke-width="1" />
<line x1="975.2" y1="239" x2="975.2" y2="275" stroke="#ffffff" stroke-width="1" />
<line x1="979.1" y1="239" x2="979.1" y2="254" stroke="#ffffff" stroke-width="1" />
<line x1="972.5" y1="262" x2="976" y2="262" stroke="#ffffff" stroke-width="0.9" />
<line x1="972.5" y1="265.6" x2="976" y2="265.6" stroke="#ffffff" stroke-width="0.9" />
<line x1="972.5" y1="269.2" x2="976" y2="269.2" stroke="#ffffff" stroke-width="0.9" />
<line x1="948.7" y1="253.9" x2="968.2" y2="253.9" stroke="#ffffff" stroke-width="1" />
<line x1="948.7" y1="255.6" x2="968.2" y2="255.6" stroke="#c0c0c0" stroke-width="1" />
<line x1="953" y1="254.8" x2="966" y2="254.8" stroke="#c04040" stroke-width="0.8" />
<line x1="1032.3" y1="219.6" x2="1032.3" y2="254.6" stroke="#9090ff" stroke-width="1.2" />
<line x1="1030.9" y1="219.6" x2="1030.9" y2="254.6" stroke="#ffffff" stroke-width="0.9" />
<path d="M1030.2 221.8 L1013.8 221.8 L1013.8 246.8 L1027.8 246.8 L1030.2 243.7 Z" fill="none" stroke="#ffffff" stroke-width="1.2" stroke-linejoin="round" />
<line x1="1029.4" y1="225.7" x2="1014.6" y2="230.4" stroke="#ffffff" stroke-width="1" />
<line x1="1029.2" y1="231" x2="1023.2" y2="233.5" stroke="#3030ff" stroke-width="1.2" />
<line x1="1027.8" y1="236.7" x2="1027.8" y2="245.2" stroke="#ffffff" stroke-width="1.6" />
<line x1="1023.9" y1="236.7" x2="1023.9" y2="245.2" stroke="#ffffff" stroke-width="1.6" />
<line x1="1020" y1="236.7" x2="1020" y2="245.2" stroke="#ffffff" stroke-width="1.6" />
<line x1="1016.1" y1="236.7" x2="1016.1" y2="245.2" stroke="#ffffff" stroke-width="1.6" />
<line x1="1025.9" y1="238" x2="1025.9" y2="244.5" stroke="#f01020" stroke-width="1" />
<line x1="1022" y1="238" x2="1022" y2="244.5" stroke="#f01020" stroke-width="1" />
<line x1="1018.1" y1="238" x2="1018.1" y2="244.5" stroke="#f01020" stroke-width="1" />
<rect x="1006" y="221.8" width="3.9" height="7.1" fill="none" stroke="#ffffff" stroke-width="0.9" rx="0" />
<line x1="1008" y1="222.5" x2="1008" y2="228.5" stroke="#f01020" stroke-width="1.3" />
<line x1="1011.4" y1="239" x2="1011.4" y2="278" stroke="#ffffff" stroke-width="1.1" />
<line x1="1009.6" y1="239" x2="1009.6" y2="278" stroke="#ffffff" stroke-width="1" />
<line x1="1006" y1="239" x2="1006" y2="275" stroke="#ffffff" stroke-width="1" />
<line x1="1002.1" y1="239" x2="1002.1" y2="254" stroke="#ffffff" stroke-width="1" />
<line x1="1008.7" y1="262" x2="1005.2" y2="262" stroke="#ffffff" stroke-width="0.9" />
<line x1="1008.7" y1="265.6" x2="1005.2" y2="265.6" stroke="#ffffff" stroke-width="0.9" />
<line x1="1008.7" y1="269.2" x2="1005.2" y2="269.2" stroke="#ffffff" stroke-width="0.9" />
<line x1="1032.5" y1="253.9" x2="1013" y2="253.9" stroke="#ffffff" stroke-width="1" />
<line x1="1032.5" y1="255.6" x2="1013" y2="255.6" stroke="#c0c0c0" stroke-width="1" />
<line x1="1028.2" y1="254.8" x2="1015.2" y2="254.8" stroke="#c04040" stroke-width="0.8" />
<rect x="969" y="230.4" width="43" height="8.6" fill="none" stroke="#ffffff" stroke-width="1.2" rx="0" />
<path d="M979.8 253.8 L1001.2 253.8 L1004.2 257 L1004.2 268 L1001.2 271 L979.8 271 L976.8 268 L976.8 257 Z" fill="none" stroke="#ffffff" stroke-width="1.2" stroke-linejoin="round" />
<rect x="967.4" y="278.8" width="45.5" height="5.4" fill="#f0f0f0" stroke="none" stroke-width="1" rx="0" />
<path d="M984.6 281.8 L990.5 273.3 L996.4 281.8 L990.5 290.5 Z" fill="#1f2328" stroke="#ffffff" stroke-width="1.2" stroke-linejoin="round" />
<ellipse cx="990.5" cy="281.8" rx="3.6" ry="6.2" fill="none" stroke="#ffffff" stroke-width="1"/>
<line x1="975" y1="281.3" x2="1005.5" y2="281.3" stroke="#f01020" stroke-width="1.2" />
<line x1="990.6" y1="270" x2="990.6" y2="303.7" stroke="#f01020" stroke-width="1.1" />
<rect x="950.3" y="278" width="17.1" height="34.3" fill="none" stroke="#ffffff" stroke-width="1.2" rx="0" />
<rect x="955.7" y="279" width="4.7" height="32.5" fill="#a8a8a8" stroke="none" stroke-width="1" rx="0" />
<line x1="953.4" y1="271.8" x2="953.4" y2="320" stroke="#f01020" stroke-width="1" stroke-dasharray="9 1.5 2 1.5"/>
<line x1="958.5" y1="271.8" x2="958.5" y2="320" stroke="#f01020" stroke-width="1" stroke-dasharray="9 1.5 2 1.5"/>
<line x1="963.2" y1="271.8" x2="963.2" y2="320" stroke="#f01020" stroke-width="1" stroke-dasharray="9 1.5 2 1.5"/>
<rect x="1012.9" y="278" width="19.3" height="34.3" fill="none" stroke="#ffffff" stroke-width="1.2" rx="0" />
<rect x="1013.6" y="279" width="2.3" height="32.5" fill="#a8a8a8" stroke="none" stroke-width="1" rx="0" />
<rect x="1020.5" y="279" width="3.1" height="32.5" fill="#a8a8a8" stroke="none" stroke-width="1" rx="0" />
<line x1="1025.5" y1="279" x2="1025.5" y2="311.5" stroke="#ffffff" stroke-width="0.9" />
<line x1="1017" y1="271.8" x2="1017" y2="320" stroke="#f01020" stroke-width="1" stroke-dasharray="9 1.5 2 1.5"/>
<line x1="1022" y1="271.8" x2="1022" y2="320" stroke="#f01020" stroke-width="1" stroke-dasharray="9 1.5 2 1.5"/>
<line x1="1027.5" y1="271.8" x2="1027.5" y2="320" stroke="#f01020" stroke-width="1" stroke-dasharray="9 1.5 2 1.5"/>
<line x1="944.8" y1="312" x2="975.2" y2="312" stroke="#f01020" stroke-width="1.1" stroke-dasharray="9 1.5 2 1.5"/>
<line x1="1009.6" y1="312" x2="1037.6" y2="312" stroke="#f01020" stroke-width="1.1" stroke-dasharray="9 1.5 2 1.5"/>
<text x="721.5" y="418.6" fill="#3c8c46" font-size="5.6" font-family="Liberation Sans, 'Noto Sans CJK SC', sans-serif" text-anchor="middle" textLength="41" lengthAdjust="spacingAndGlyphs">技 术 要 求</text>
<rect x="662.3" y="425" width="93.7" height="6.2" fill="#0aeb0a" stroke="none" stroke-width="1" rx="0" />
<rect x="663.2" y="433" width="95" height="7" fill="#0aeb0a" stroke="none" stroke-width="1" rx="0" />
<rect x="663.2" y="441.5" width="97.8" height="6.5" fill="#0aeb0a" stroke="none" stroke-width="1" rx="0" />
<rect x="663.2" y="450" width="93.6" height="7" fill="#0aeb0a" stroke="none" stroke-width="1" rx="0" />
<rect x="663.2" y="458.8" width="93.6" height="6.2" fill="#0aeb0a" stroke="none" stroke-width="1" rx="0" />
<rect x="663.2" y="466.5" width="93.6" height="7.1" fill="#0aeb0a" stroke="none" stroke-width="1" rx="0" />
<rect x="663.2" y="475.8" width="64.8" height="6.2" fill="#0aeb0a" stroke="none" stroke-width="1" rx="0" />
<rect x="663.2" y="483.5" width="95" height="6.5" fill="#0aeb0a" stroke="none" stroke-width="1" rx="0" />
<rect x="663.2" y="492.4" width="95" height="6.2" fill="#0aeb0a" stroke="none" stroke-width="1" rx="0" />
<rect x="663.2" y="500.8" width="88.3" height="6.2" fill="#0aeb0a" stroke="none" stroke-width="1" rx="0" />
<rect x="663.2" y="509.3" width="93.6" height="6.7" fill="#0aeb0a" stroke="none" stroke-width="1" rx="0" />
<rect x="663.2" y="517.4" width="92.8" height="6.6" fill="#0aeb0a" stroke="none" stroke-width="1" rx="0" />
<rect x="663.2" y="526.3" width="89.8" height="6.2" fill="#0aeb0a" stroke="none" stroke-width="1" rx="0" />
<rect x="663.2" y="534" width="96.8" height="6.5" fill="#0aeb0a" stroke="none" stroke-width="1" rx="0" />
<rect x="663.2" y="543.2" width="80.8" height="6.6" fill="#0aeb0a" stroke="none" stroke-width="1" rx="0" />
<line x1="915.5" y1="401" x2="1069.6" y2="401" stroke="#d81ed8" stroke-width="1.5" />
<line x1="915.5" y1="410.9" x2="1069.6" y2="410.9" stroke="#d81ed8" stroke-width="1.5" />
<line x1="915.5" y1="420.7" x2="1069.6" y2="420.7" stroke="#d81ed8" stroke-width="1.5" />
<line x1="915.5" y1="430.6" x2="1069.6" y2="430.6" stroke="#d81ed8" stroke-width="1.5" />
<line x1="915.5" y1="440.5" x2="1069.6" y2="440.5" stroke="#d81ed8" stroke-width="1.5" />
<line x1="915.5" y1="450.4" x2="1069.6" y2="450.4" stroke="#d81ed8" stroke-width="1.5" />
<line x1="915.5" y1="460.2" x2="1069.6" y2="460.2" stroke="#d81ed8" stroke-width="1.5" />
<line x1="915.5" y1="470.1" x2="1069.6" y2="470.1" stroke="#d81ed8" stroke-width="1.5" />
<line x1="915.5" y1="480" x2="1069.6" y2="480" stroke="#d81ed8" stroke-width="1.5" />
<rect x="917.3" y="394" width="2.3" height="4.8" fill="#0aeb0a" stroke="none" stroke-width="1" rx="0" />
<rect x="933.4" y="393.9" width="11.8" height="5" fill="#0aeb0a" stroke="none" stroke-width="1" rx="0" />
<rect x="969.4" y="393.8" width="11.5" height="5.2" fill="#0aeb0a" stroke="none" stroke-width="1" rx="0" />
<rect x="1012" y="393.9" width="9.7" height="5" fill="#0aeb0a" stroke="none" stroke-width="1" rx="0" />
<rect x="917.3" y="403.9" width="2.3" height="4.8" fill="#0aeb0a" stroke="none" stroke-width="1" rx="0" />
<rect x="933.4" y="403.8" width="11.8" height="5" fill="#0aeb0a" stroke="none" stroke-width="1" rx="0" />
<rect x="968.7" y="403.7" width="12.5" height="5.2" fill="#0aeb0a" stroke="none" stroke-width="1" rx="0" />
<rect x="1012" y="403.8" width="9.7" height="5" fill="#0aeb0a" stroke="none" stroke-width="1" rx="0" />
<rect x="917.3" y="413.7" width="2.3" height="4.8" fill="#0aeb0a" stroke="none" stroke-width="1" rx="0" />
<rect x="933.4" y="413.6" width="11.8" height="5" fill="#0aeb0a" stroke="none" stroke-width="1" rx="0" />
<rect x="968.7" y="413.5" width="12.2" height="5.2" fill="#0aeb0a" stroke="none" stroke-width="1" rx="0" />
<rect x="1012" y="413.6" width="9.7" height="5" fill="#0aeb0a" stroke="none" stroke-width="1" rx="0" />
<rect x="917.3" y="423.6" width="2.3" height="4.8" fill="#0aeb0a" stroke="none" stroke-width="1" rx="0" />
<rect x="933.4" y="423.5" width="11.8" height="5" fill="#0aeb0a" stroke="none" stroke-width="1" rx="0" />
<rect x="967.1" y="423.4" width="16.5" height="5.2" fill="#0aeb0a" stroke="none" stroke-width="1" rx="0" />
<rect x="1012" y="423.5" width="9.7" height="5" fill="#0aeb0a" stroke="none" stroke-width="1" rx="0" />
<rect x="917.3" y="433.4" width="2.3" height="4.8" fill="#0aeb0a" stroke="none" stroke-width="1" rx="0" />
<rect x="933.4" y="433.3" width="11.8" height="5" fill="#0aeb0a" stroke="none" stroke-width="1" rx="0" />
<rect x="967.1" y="433.2" width="16.5" height="5.2" fill="#0aeb0a" stroke="none" stroke-width="1" rx="0" />
<rect x="1012" y="433.3" width="9.7" height="5" fill="#0aeb0a" stroke="none" stroke-width="1" rx="0" />
<rect x="917.3" y="443.3" width="2.3" height="4.8" fill="#0aeb0a" stroke="none" stroke-width="1" rx="0" />
<rect x="933.4" y="443.2" width="11.8" height="5" fill="#0aeb0a" stroke="none" stroke-width="1" rx="0" />
<rect x="967.9" y="443.1" width="14.9" height="5.2" fill="#0aeb0a" stroke="none" stroke-width="1" rx="0" />
<rect x="1012" y="443.2" width="9.7" height="5" fill="#0aeb0a" stroke="none" stroke-width="1" rx="0" />
<rect x="917.3" y="453.2" width="2.3" height="4.8" fill="#0aeb0a" stroke="none" stroke-width="1" rx="0" />
<rect x="933.4" y="453.1" width="11.8" height="5" fill="#0aeb0a" stroke="none" stroke-width="1" rx="0" />
<rect x="967.9" y="453" width="14.9" height="5.2" fill="#0aeb0a" stroke="none" stroke-width="1" rx="0" />
<rect x="1012" y="453.1" width="9.7" height="5" fill="#0aeb0a" stroke="none" stroke-width="1" rx="0" />
<rect x="917.3" y="463" width="2.3" height="4.8" fill="#0aeb0a" stroke="none" stroke-width="1" rx="0" />
<rect x="933.4" y="462.9" width="11.8" height="5" fill="#0aeb0a" stroke="none" stroke-width="1" rx="0" />
<rect x="965.3" y="462.8" width="18.8" height="5.2" fill="#0aeb0a" stroke="none" stroke-width="1" rx="0" />
<rect x="1012" y="462.9" width="9.7" height="5" fill="#0aeb0a" stroke="none" stroke-width="1" rx="0" />
<rect x="917.3" y="472.9" width="2.3" height="4.8" fill="#0aeb0a" stroke="none" stroke-width="1" rx="0" />
<rect x="933.4" y="472.8" width="11.8" height="5" fill="#0aeb0a" stroke="none" stroke-width="1" rx="0" />
<rect x="970.2" y="472.7" width="10.2" height="5.2" fill="#0aeb0a" stroke="none" stroke-width="1" rx="0" />
<rect x="1012" y="472.8" width="9.7" height="5" fill="#0aeb0a" stroke="none" stroke-width="1" rx="0" />
<rect x="917.3" y="482.7" width="2.3" height="4.8" fill="#0aeb0a" stroke="none" stroke-width="1" rx="0" />
<rect x="933.4" y="482.6" width="11.8" height="5" fill="#0aeb0a" stroke="none" stroke-width="1" rx="0" />
<rect x="967.9" y="482.5" width="14.1" height="5.2" fill="#0aeb0a" stroke="none" stroke-width="1" rx="0" />
<rect x="1012" y="482.6" width="9.7" height="5" fill="#0aeb0a" stroke="none" stroke-width="1" rx="0" />
<rect x="996.5" y="482.7" width="2.3" height="4.8" fill="#0aeb0a" stroke="none" stroke-width="1" rx="0" />
<line x1="922" y1="391.8" x2="922" y2="510" stroke="#e6e62d" stroke-width="1.3" />
<line x1="956.6" y1="391.8" x2="956.6" y2="510" stroke="#e6e62d" stroke-width="1.3" />
<line x1="994.7" y1="391.8" x2="994.7" y2="510" stroke="#e6e62d" stroke-width="1.3" />
<line x1="1000.7" y1="391.8" x2="1000.7" y2="510" stroke="#e6e62d" stroke-width="1.3" />
<line x1="1033.9" y1="391.8" x2="1033.9" y2="510" stroke="#e6e62d" stroke-width="1.3" />
<line x1="1052.2" y1="391.8" x2="1052.2" y2="510" stroke="#e6e62d" stroke-width="1.3" />
<line x1="1042" y1="391.8" x2="1042" y2="499.8" stroke="#e6e62d" stroke-width="1.3" />
<line x1="915.5" y1="490.5" x2="1069.6" y2="490.5" stroke="#e6e62d" stroke-width="1.5" />
<line x1="915.5" y1="510" x2="1069.6" y2="510" stroke="#e6e62d" stroke-width="1.5" />
<line x1="1033.9" y1="499.8" x2="1052.2" y2="499.8" stroke="#e6e62d" stroke-width="1.3" />
<rect x="917.2" y="493.8" width="2.8" height="12.2" fill="#0aeb0a" stroke="none" stroke-width="1" rx="0" />
<rect x="929" y="496.2" width="20.6" height="6.5" fill="#0aeb0a" stroke="none" stroke-width="1" rx="0" />
<rect x="964.7" y="496.2" width="20.6" height="6.5" fill="#0aeb0a" stroke="none" stroke-width="1" rx="0" />
<rect x="996.3" y="493.8" width="2.4" height="12.2" fill="#0aeb0a" stroke="none" stroke-width="1" rx="0" />
<rect x="1006.3" y="496.2" width="20.6" height="6.5" fill="#0aeb0a" stroke="none" stroke-width="1" rx="0" />
<rect x="1035.2" y="491" width="5.2" height="6.5" fill="#0aeb0a" stroke="none" stroke-width="1" rx="0" />
<rect x="1044.5" y="491" width="5.2" height="6.5" fill="#0aeb0a" stroke="none" stroke-width="1" rx="0" />
<rect x="1037.6" y="501.9" width="11.4" height="6" fill="#0aeb0a" stroke="none" stroke-width="1" rx="0" />
<rect x="1056.6" y="496.2" width="8.6" height="6.5" fill="#0aeb0a" stroke="none" stroke-width="1" rx="0" />
<line x1="915.5" y1="518.9" x2="984.5" y2="518.9" stroke="#d81ed8" stroke-width="1.5" />
<line x1="915.5" y1="529.5" x2="984.5" y2="529.5" stroke="#d81ed8" stroke-width="1.5" />
<line x1="915.5" y1="568.9" x2="984.5" y2="568.9" stroke="#d81ed8" stroke-width="1.5" />
<line x1="915.5" y1="578.9" x2="984.5" y2="578.9" stroke="#d81ed8" stroke-width="1.5" />
<line x1="923.6" y1="510" x2="923.6" y2="538.7" stroke="#e6e62d" stroke-width="1.3" />
<line x1="932.6" y1="510" x2="932.6" y2="538.7" stroke="#e6e62d" stroke-width="1.3" />
<line x1="945.5" y1="510" x2="945.5" y2="538.7" stroke="#e6e62d" stroke-width="1.3" />
<line x1="959.3" y1="510" x2="959.3" y2="538.7" stroke="#e6e62d" stroke-width="1.3" />
<line x1="969.5" y1="510" x2="969.5" y2="538.7" stroke="#e6e62d" stroke-width="1.3" />
<line x1="925.3" y1="548.9" x2="925.3" y2="588.1" stroke="#e6e62d" stroke-width="1.3" />
<line x1="935" y1="548.9" x2="935" y2="588.1" stroke="#e6e62d" stroke-width="1.3" />
<line x1="948.8" y1="548.9" x2="948.8" y2="588.1" stroke="#e6e62d" stroke-width="1.3" />
<line x1="959.3" y1="548.9" x2="959.3" y2="588.1" stroke="#e6e62d" stroke-width="1.3" />
<line x1="969.5" y1="548.9" x2="969.5" y2="588.1" stroke="#e6e62d" stroke-width="1.3" />
<line x1="984.5" y1="510" x2="984.5" y2="588.1" stroke="#e6e62d" stroke-width="1.4" />
<line x1="915.5" y1="538.7" x2="984.5" y2="538.7" stroke="#e6e62d" stroke-width="1.4" />
<line x1="915.5" y1="548.9" x2="1026.6" y2="548.9" stroke="#e6e62d" stroke-width="1.4" />
<line x1="915.5" y1="559.5" x2="984.5" y2="559.5" stroke="#e6e62d" stroke-width="1.4" />
<rect x="917.2" y="540.8" width="4.9" height="6.5" fill="#ff14ff" stroke="none" stroke-width="1" rx="0" />
<rect x="924.8" y="540.8" width="6.2" height="6.5" fill="#ff14ff" stroke="none" stroke-width="1" rx="0" />
<rect x="936.6" y="540.8" width="5.4" height="6.5" fill="#ff14ff" stroke="none" stroke-width="1" rx="0" />
<rect x="946.8" y="540.8" width="11.7" height="6.5" fill="#ff14ff" stroke="none" stroke-width="1" rx="0" />
<rect x="962.1" y="540.8" width="5" height="6.5" fill="#ff14ff" stroke="none" stroke-width="1" rx="0" />
<rect x="970.7" y="540.8" width="12.2" height="6.5" fill="#ff14ff" stroke="none" stroke-width="1" rx="0" />
<rect x="918" y="551.3" width="4.5" height="6.2" fill="#ff14ff" stroke="none" stroke-width="1" rx="0" />
<rect x="950.7" y="551.3" width="7.5" height="6.2" fill="#ff14ff" stroke="none" stroke-width="1" rx="0" />
<rect x="918" y="571.1" width="4.5" height="5.8" fill="#ff14ff" stroke="none" stroke-width="1" rx="0" />
<rect x="918" y="580.9" width="4.5" height="5.4" fill="#ff14ff" stroke="none" stroke-width="1" rx="0" />
<rect x="952" y="580.9" width="5.7" height="5.4" fill="#ff14ff" stroke="none" stroke-width="1" rx="0" />
<line x1="1026.6" y1="510" x2="1026.6" y2="588.1" stroke="#e6e62d" stroke-width="1.4" />
<line x1="984.5" y1="563.5" x2="1069.6" y2="563.5" stroke="#e6e62d" stroke-width="1.4" />
<line x1="984.5" y1="575.7" x2="1026.6" y2="575.7" stroke="#e6e62d" stroke-width="1.4" />
<line x1="1000.7" y1="548.9" x2="1000.7" y2="575.7" stroke="#d81ed8" stroke-width="1.3" />
<line x1="1009.6" y1="548.9" x2="1009.6" y2="575.7" stroke="#e6e62d" stroke-width="1.3" />
<line x1="1018.5" y1="548.9" x2="1018.5" y2="575.7" stroke="#e6e62d" stroke-width="1.3" />
<line x1="989.3" y1="563.5" x2="989.3" y2="575.7" stroke="#d81ed8" stroke-width="1.3" />
<line x1="995" y1="563.5" x2="995" y2="575.7" stroke="#d81ed8" stroke-width="1.3" />
<rect x="986.9" y="553.8" width="10.2" height="4.9" fill="#0aeb0a" stroke="none" stroke-width="1" rx="0" />
<rect x="1002.3" y="553.8" width="5.2" height="4.9" fill="#0aeb0a" stroke="none" stroke-width="1" rx="0" />
<rect x="1011.2" y="553.8" width="4.9" height="4.9" fill="#0aeb0a" stroke="none" stroke-width="1" rx="0" />
<rect x="1019.8" y="553.8" width="5.2" height="4.9" fill="#0aeb0a" stroke="none" stroke-width="1" rx="0" />
<rect x="985.3" y="566.8" width="2.8" height="5.7" fill="#0aeb0a" stroke="none" stroke-width="1" rx="0" />
<rect x="1004.2" y="567.9" width="1.6" height="5.4" fill="#0aeb0a" stroke="none" stroke-width="1" rx="0" />
<rect x="1019.8" y="568.4" width="5.2" height="4.4" fill="#0aeb0a" stroke="none" stroke-width="1" rx="0" />
<rect x="991.8" y="579.7" width="27.6" height="5.4" fill="#0aeb0a" stroke="none" stroke-width="1" rx="0" />
<line x1="1026.6" y1="534.8" x2="1069.6" y2="534.8" stroke="#e6e62d" stroke-width="1.4" />
<rect x="1041.5" y="573.2" width="12.6" height="7.6" fill="#0aeb0a" stroke="none" stroke-width="1" rx="0" />
<text x="1004.6" y="529.6" fill="#3c8c46" font-size="5.2" font-family="Liberation Sans, 'Noto Sans CJK SC', sans-serif" text-anchor="middle" textLength="7" lengthAdjust="spacingAndGlyphs">总装</text>
<text x="1047" y="524.2" fill="#3c8c46" font-size="5.2" font-family="Liberation Sans, 'Noto Sans CJK SC', sans-serif" text-anchor="middle" textLength="18" lengthAdjust="spacingAndGlyphs">自卸汽车</text>
<text x="1047" y="549.6" fill="#3c8c46" font-size="5.2" font-family="Liberation Sans, 'Noto Sans CJK SC', sans-serif" text-anchor="middle" textLength="29" lengthAdjust="spacingAndGlyphs">自卸汽车总装图</text>
<path d="M915.5 588.1 L915.5 393.3 Q915.5 391.8 917.0 391.8 L1069.6 391.8" fill="none" stroke="#e6e62d" stroke-width="1.5" />
</svg>
</body></html>
